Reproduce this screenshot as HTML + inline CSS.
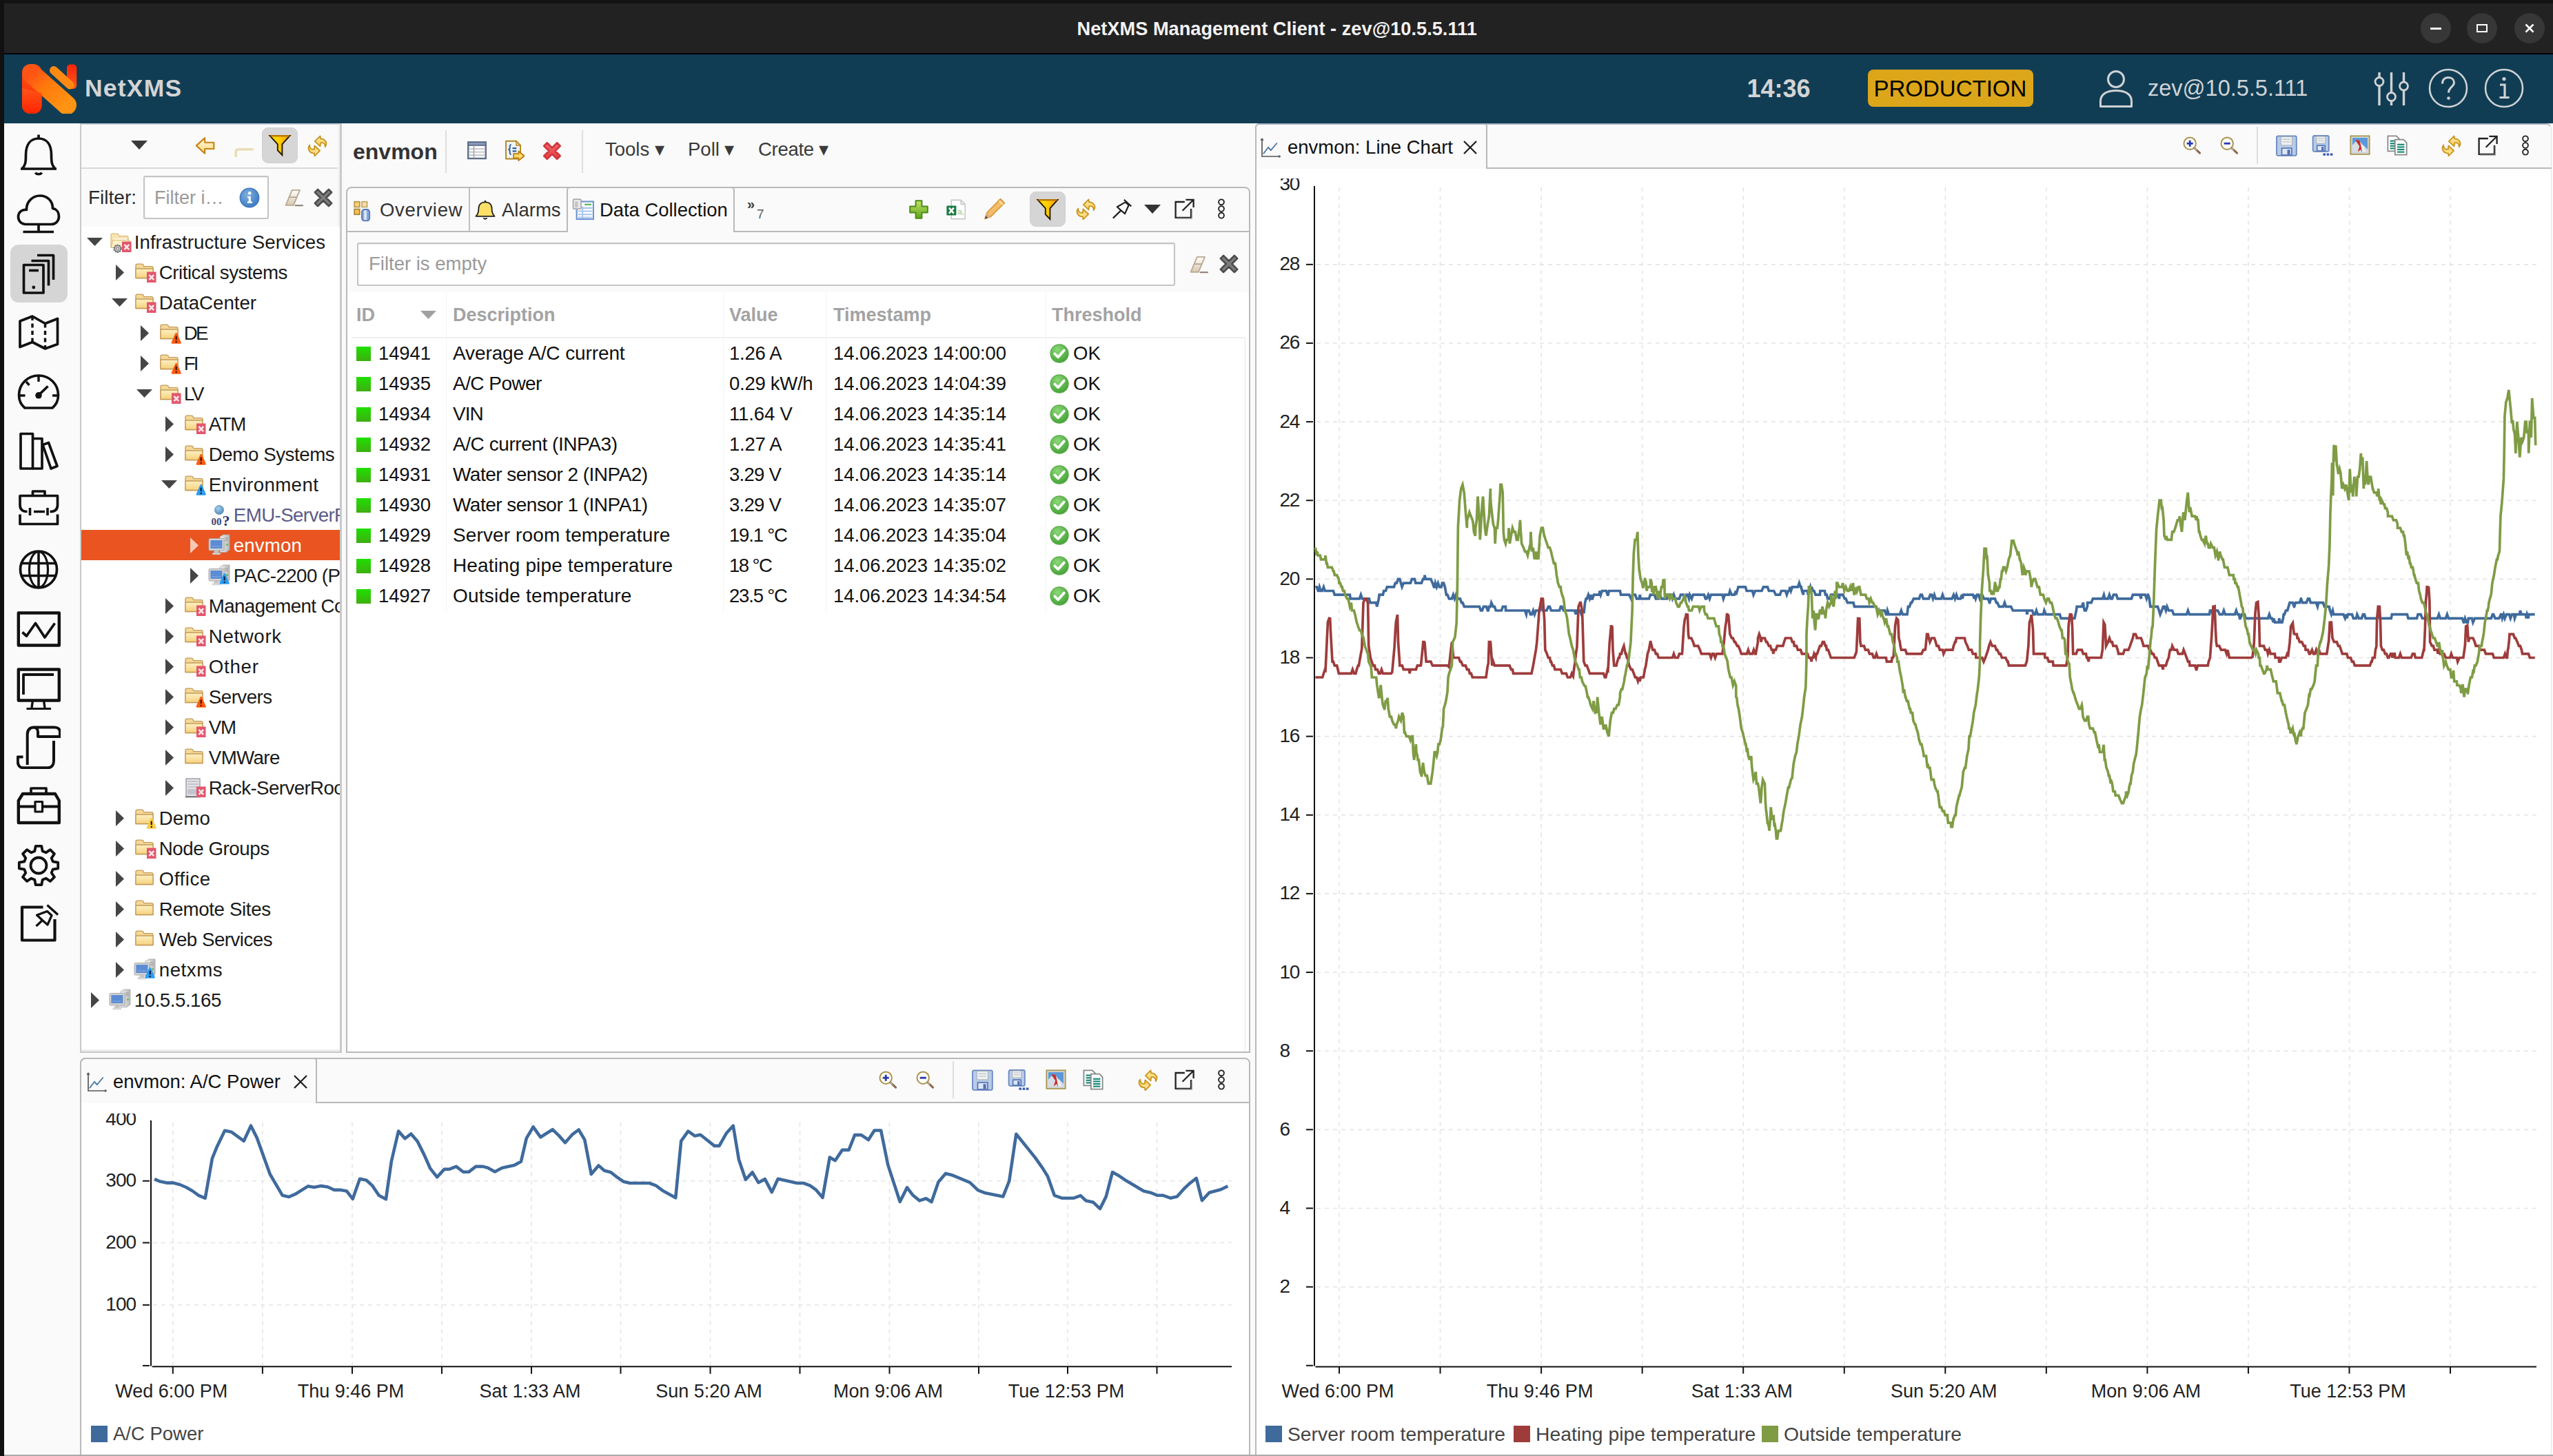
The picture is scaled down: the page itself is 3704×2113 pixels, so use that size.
<!DOCTYPE html><html><head><meta charset="utf-8"><title>NetXMS Management Client</title>
<style>
html,body{margin:0;padding:0;}
body{width:3704px;height:2113px;overflow:hidden;background:#fafafa;font-family:"Liberation Sans",sans-serif;position:relative;}
div,svg{box-sizing:border-box;}
</style></head><body>
<div style="position:absolute;left:0px;top:0px;width:3704px;height:79px;background:#131313;"></div>
<div style="position:absolute;left:6px;top:5px;width:3698px;height:72px;background:#222222;"></div>
<div style="position:absolute;left:0px;top:77px;width:3704px;height:2px;background:#02020a;"></div>
<div style="position:absolute;left:0px;top:0px;width:6px;height:2113px;background:#111111;"></div>
<div style="position:absolute;left:1562.5px;top:21.5px;height:40px;line-height:40px;font-size:27.2px;color:#f2f2f2;font-weight:700;white-space:pre;letter-spacing:0.02px;">NetXMS Management Client - zev@10.5.5.111</div>
<div style="position:absolute;left:3512px;top:19px;width:44px;height:44px;border-radius:50%;background:#373737;"></div>
<div style="position:absolute;left:3526px;top:40px;width:16px;height:2.5px;background:#fff;"></div>
<div style="position:absolute;left:3579px;top:19px;width:44px;height:44px;border-radius:50%;background:#373737;"></div>
<div style="position:absolute;left:3593px;top:35px;width:16px;height:12px;border:2.5px solid #fff;"></div>
<div style="position:absolute;left:3648px;top:19px;width:44px;height:44px;border-radius:50%;background:#373737;"></div>
<svg style="position:absolute;left:3662px;top:33px;" width="16" height="16" viewBox="0 0 16 16"><path d="M2.5 2.5 L13.5 13.5 M13.5 2.5 L2.5 13.5" stroke="#fff" stroke-width="2.6" fill="none"/></svg>
<div style="position:absolute;left:6px;top:79px;width:3698px;height:100px;background:#113d54;"></div>
<svg style="position:absolute;left:31px;top:92px;" width="82" height="73" viewBox="0 0 82 73"><defs><linearGradient id="lg1" x1="0" y1="0" x2="0" y2="1"><stop offset="0" stop-color="#ff5418"/><stop offset="1" stop-color="#ff2400"/></linearGradient><linearGradient id="lg2" x1="0" y1="0" x2="1" y2="1"><stop offset="0" stop-color="#ff5414"/><stop offset=".4" stop-color="#ff7a0c"/><stop offset="1" stop-color="#ff9414"/></linearGradient><linearGradient id="lg3" x1="0" y1="0" x2="0" y2="1"><stop offset="0" stop-color="#ff2408"/><stop offset="1" stop-color="#ff5a1a"/></linearGradient></defs><rect x="66" y="1.5" width="14.2" height="35.5" rx="5" fill="url(#lg3)"/><path d="M47 10 L70.5 31.5" stroke="#ff8a12" stroke-width="12" stroke-linecap="round" fill="none"/><rect x="1" y="1" width="28.5" height="72" rx="12" fill="url(#lg1)"/><path d="M15.5 15.5 L66 60.5" stroke="url(#lg2)" stroke-width="28" stroke-linecap="round" fill="none"/><path d="M1 36 V61 C1 68 6 73 13 73 H17.5 C24.5 73 29.5 68 29.5 61 V43 Z" fill="url(#lg1)"/></svg>
<div style="position:absolute;left:123px;top:108px;height:40px;line-height:40px;font-size:35.5px;color:#d4d4d4;font-weight:700;white-space:pre;letter-spacing:1.2px;">NetXMS</div>
<div style="position:absolute;left:2534.5px;top:109px;height:40px;line-height:40px;font-size:36px;color:#d4d4d4;font-weight:700;white-space:pre;">14:36</div>
<div style="position:absolute;left:2710px;top:101px;width:240px;height:54px;background:#dba61a;border-radius:8px;"></div>
<div style="position:absolute;left:2718.5px;top:109px;height:40px;line-height:40px;font-size:33px;color:#000;font-weight:400;white-space:pre;">PRODUCTION</div>
<svg style="position:absolute;left:3044px;top:100px;" width="52" height="58" viewBox="0 0 52 58"><circle cx="26" cy="15" r="11.5" fill="none" stroke="#cfd2d4" stroke-width="3"/><path d="M3.5 54.5 V47 C3.5 37 12 31.5 26 31.5 S48.5 37 48.5 47 V54.5 Z" fill="none" stroke="#cfd2d4" stroke-width="3" stroke-linejoin="round"/></svg>
<div style="position:absolute;left:3116px;top:108px;height:40px;line-height:40px;font-size:32.5px;color:#cfd3d6;font-weight:400;white-space:pre;">zev@10.5.5.111</div>
<svg style="position:absolute;left:3442px;top:100px;" width="56" height="56" viewBox="0 0 56 56"><path d="M10 5 V12.0 M10 25.0 V53" stroke="#cfd2d4" stroke-width="3.4" fill="none"/><circle cx="10" cy="18.5" r="6" fill="none" stroke="#cfd2d4" stroke-width="2.8"/><path d="M27.5 5 V34.0 M27.5 47.0 V53" stroke="#cfd2d4" stroke-width="3.4" fill="none"/><circle cx="27.5" cy="40.5" r="6" fill="none" stroke="#cfd2d4" stroke-width="2.8"/><path d="M45.5 5 V18.5 M45.5 31.5 V53" stroke="#cfd2d4" stroke-width="3.4" fill="none"/><circle cx="45.5" cy="25" r="6" fill="none" stroke="#cfd2d4" stroke-width="2.8"/></svg>
<svg style="position:absolute;left:3522px;top:98px;" width="60" height="60" viewBox="0 0 60 60"><circle cx="30" cy="30" r="27" fill="none" stroke="#cfd2d4" stroke-width="2.6"/><path d="M21.5 23.5 C21.5 17 25.5 14.5 30 14.5 C35 14.5 38.5 17.5 38.5 22 C38.5 28 30.5 28.5 30.5 36.5" fill="none" stroke="#cfd2d4" stroke-width="3"/><circle cx="30.5" cy="44.5" r="2.3" fill="#cfd2d4"/></svg>
<svg style="position:absolute;left:3603px;top:98px;" width="60" height="60" viewBox="0 0 60 60"><circle cx="30" cy="30" r="27" fill="none" stroke="#cfd2d4" stroke-width="2.6"/><circle cx="30" cy="16.5" r="2.6" fill="#cfd2d4"/><path d="M24 25 H31 V43 M23.5 43.5 H37.5" fill="none" stroke="#cfd2d4" stroke-width="3.2"/></svg>
<div style="position:absolute;left:6px;top:179px;width:111px;height:1934px;background:#fafafa;"></div>
<div style="position:absolute;left:14.5px;top:355px;width:83px;height:83.5px;background:#d5d5d5;border-radius:12px;"></div>
<svg style="position:absolute;left:24px;top:193px;" width="64" height="64" viewBox="0 0 64 64"><path d="M32 2.5 V8" fill="none" stroke="#111" stroke-width="3.7" stroke-linejoin="round" stroke-linecap="butt" /><path d="M6 52 H58 M8 52 C13 47 13.5 42 13.5 32 C13.5 17 20 8 32 8 C44 8 50.5 17 50.5 32 C50.5 42 51 47 56 52" fill="none" stroke="#111" stroke-width="3.7" stroke-linejoin="round" stroke-linecap="butt" /><path d="M27.5 57.5 C29 60.5 35 60.5 36.5 57.5" fill="none" stroke="#111" stroke-width="3.6" stroke-linejoin="round" stroke-linecap="butt" /></svg>
<svg style="position:absolute;left:24px;top:278px;" width="64" height="64" viewBox="0 0 64 64"><path d="M14 47.5 C6 47.5 2.5 42 2.5 36.5 C2.5 30 8 25.5 14.5 26.5 C14 14 24 6 34 6 C45 6 52.5 14 52.5 24.5 C58 25.5 61.5 30 61.5 36 C61.5 42.5 57 47.5 50 47.5 Z" fill="none" stroke="#111" stroke-width="3.7" stroke-linejoin="round" stroke-linecap="butt" /><path d="M32 47.5 V58 M9.5 58.5 H54" fill="none" stroke="#111" stroke-width="3.7" stroke-linejoin="round" stroke-linecap="butt" /></svg>
<svg style="position:absolute;left:24px;top:365px;" width="64" height="64" viewBox="0 0 64 64"><path d="M10.5 19.5 H39 V60 H10.5 Z" fill="none" stroke="#111" stroke-width="3.7" stroke-linejoin="round" stroke-linecap="butt" /><path d="M18 27.5 H32" fill="none" stroke="#111" stroke-width="3.6" stroke-linejoin="round" stroke-linecap="butt" /><circle cx="24.8" cy="52" r="2.4" fill="#111"/><path d="M21.5 13.5 H46.5 V49.5" fill="none" stroke="#111" stroke-width="3.7" stroke-linejoin="round" stroke-linecap="butt" /><path d="M30 5.5 H53.5 V41" fill="none" stroke="#111" stroke-width="3.7" stroke-linejoin="round" stroke-linecap="butt" /></svg>
<svg style="position:absolute;left:24px;top:450px;" width="64" height="64" viewBox="0 0 64 64"><path d="M5 16 L23 9 L41.5 19.5 L59.5 12.5 V49.5 L41.5 56 L23 46.5 L5 53.5 Z" fill="none" stroke="#111" stroke-width="3.7" stroke-linejoin="round" stroke-linecap="butt" /><path d="M23 9 V46.5 M41.5 19.5 V56" fill="none" stroke="#111" stroke-width="3.4" stroke-linejoin="round" stroke-linecap="butt" stroke-dasharray="6 4.5"/></svg>
<svg style="position:absolute;left:24px;top:537px;" width="64" height="64" viewBox="0 0 64 64"><path d="M12 55 C6 50 3.5 43.5 3.5 36.5 C3.5 20.5 16 8 32 8 C48 8 60.5 20.5 60.5 36.5 C60.5 43.5 58 50 52 55 Z" fill="none" stroke="#111" stroke-width="3.7" stroke-linejoin="round" stroke-linecap="butt" /><path d="M32 9 V17 M4.5 37 H12.5 M52 37 H59.5 M14 17 L18.5 22" fill="none" stroke="#111" stroke-width="3.4" stroke-linejoin="round" stroke-linecap="butt" /><path d="M32 36.5 L45.5 23.5" fill="none" stroke="#111" stroke-width="3.8" stroke-linejoin="round" stroke-linecap="butt" /><circle cx="32" cy="36.8" r="4.8" fill="#111"/></svg>
<svg style="position:absolute;left:24px;top:623px;" width="64" height="64" viewBox="0 0 64 64"><path d="M6 6.5 H23.5 V57 H6 Z" fill="none" stroke="#111" stroke-width="3.7" stroke-linejoin="round" stroke-linecap="butt" /><path d="M23.5 13.5 H37 V57 H23.5" fill="none" stroke="#111" stroke-width="3.7" stroke-linejoin="round" stroke-linecap="butt" /><path d="M38 22.5 L46.5 19.5 L59 53.5 L50 57 Z" fill="none" stroke="#111" stroke-width="3.7" stroke-linejoin="round" stroke-linecap="butt" /></svg>
<svg style="position:absolute;left:24px;top:708px;" width="64" height="64" viewBox="0 0 64 64"><path d="M23.5 11.5 V5 H41 V11.5" fill="none" stroke="#111" stroke-width="3.7" stroke-linejoin="round" stroke-linecap="butt" /><path d="M15.5 34.5 C8 34.5 5 31 5 25 V11.5 H59.5 V25 C59.5 31 56.5 34.5 48.5 34.5" fill="none" stroke="#111" stroke-width="3.7" stroke-linejoin="round" stroke-linecap="butt" /><path d="M19.5 29 V40 M45 29 V40 M25 34.5 H41" fill="none" stroke="#111" stroke-width="3.6" stroke-linejoin="round" stroke-linecap="butt" /><path d="M5 38.5 V52.5 H59.5 V38.5" fill="none" stroke="#111" stroke-width="3.7" stroke-linejoin="round" stroke-linecap="butt" /></svg>
<svg style="position:absolute;left:24px;top:795px;" width="64" height="64" viewBox="0 0 64 64"><circle cx="32" cy="31.5" r="26.5" fill="none" stroke="#111" stroke-width="3.7"/><path d="M32 5 V58 M7 22.5 H57 M7 40.5 H57" fill="none" stroke="#111" stroke-width="3.6" stroke-linejoin="round" stroke-linecap="butt" /><ellipse cx="32" cy="31.5" rx="13.5" ry="26" fill="none" stroke="#111" stroke-width="3.2"/></svg>
<svg style="position:absolute;left:24px;top:880px;" width="64" height="64" viewBox="0 0 64 64"><path d="M2.8 9.5 H61.8 V56.5 H2.8 Z" fill="none" stroke="#111" stroke-width="4.4" stroke-linejoin="round" stroke-linecap="butt" /><path d="M8.5 37.5 L14.5 43 L27.5 24.5 L41 45 L55.5 24.5" fill="none" stroke="#111" stroke-width="3.8" stroke-linejoin="round" stroke-linecap="butt" /></svg>
<svg style="position:absolute;left:24px;top:966px;" width="64" height="64" viewBox="0 0 64 64"><path d="M2.8 5.5 H61.8 V50.5 H2.8 Z" fill="none" stroke="#111" stroke-width="4.4" stroke-linejoin="round" stroke-linecap="butt" /><path d="M10 42 V13 H54" fill="none" stroke="#111" stroke-width="3.8" stroke-linejoin="round" stroke-linecap="butt" /><path d="M23.5 50.5 L22 61 M39.5 50.5 L41 61" fill="none" stroke="#111" stroke-width="3.4" stroke-linejoin="round" stroke-linecap="butt" /><path d="M14.5 63 H50" fill="none" stroke="#111" stroke-width="3.8" stroke-linejoin="round" stroke-linecap="butt" /></svg>
<svg style="position:absolute;left:24px;top:1052px;" width="64" height="64" viewBox="0 0 64 64"><path d="M15.7 58 V14 C15.7 7 19 3.5 26 3.5 H55 C60.5 3.5 63 6.5 63 10.5 V17 H31 V10 C31 6 28.5 3.5 24 3.5" fill="none" stroke="#111" stroke-width="4" stroke-linejoin="round" stroke-linecap="butt" /><path d="M54 23 V52 C54 58 51 62.3 45 62.3 H10 C4.5 62.3 1.8 58.5 1.8 53 V46.5 H9.5" fill="none" stroke="#111" stroke-width="4" stroke-linejoin="round" stroke-linecap="butt" /></svg>
<svg style="position:absolute;left:24px;top:1138px;" width="64" height="64" viewBox="0 0 64 64"><path d="M21 14 V6 H43 V14" fill="none" stroke="#111" stroke-width="3.7" stroke-linejoin="round" stroke-linecap="butt" /><path d="M2.8 24 L9 14 H56 L61.8 24 V56 H2.8 Z" fill="none" stroke="#111" stroke-width="4.4" stroke-linejoin="round" stroke-linecap="butt" /><path d="M2.8 32.5 H26.5 M38 32.5 H61.8" fill="none" stroke="#111" stroke-width="3.8" stroke-linejoin="round" stroke-linecap="butt" /><path d="M27 25.5 H37.5 V40 H27 Z" fill="none" stroke="#111" stroke-width="3.2" stroke-linejoin="round" stroke-linecap="butt" /></svg>
<svg style="position:absolute;left:24px;top:1224px;" width="64" height="64" viewBox="0 0 64 64"><path d="M26.3 11.3 L27.7 3.8 L36.3 3.8 L37.7 11.3 L42.6 13.3 L48.9 9.1 L54.9 15.1 L50.7 21.4 L52.7 26.3 L60.2 27.7 L60.2 36.3 L52.7 37.7 L50.7 42.6 L54.9 48.9 L48.9 54.9 L42.6 50.7 L37.7 52.7 L36.3 60.2 L27.7 60.2 L26.3 52.7 L21.4 50.7 L15.1 54.9 L9.1 48.9 L13.3 42.6 L11.3 37.7 L3.8 36.3 L3.8 27.7 L11.3 26.3 L13.3 21.4 L9.1 15.1 L15.1 9.1 L21.4 13.3 Z" fill="none" stroke="#111" stroke-width="3.8" stroke-linejoin="round" stroke-linecap="butt" /><circle cx="32" cy="32" r="11.5" fill="none" stroke="#111" stroke-width="3.8"/></svg>
<svg style="position:absolute;left:24px;top:1308px;" width="64" height="64" viewBox="0 0 64 64"><path d="M38.5 8.5 H8 V56.5 H55.5 V26" fill="none" stroke="#111" stroke-width="4.2" stroke-linejoin="round" stroke-linecap="butt" /><path d="M44.5 5.5 L60 19.5" fill="none" stroke="#111" stroke-width="3.4" stroke-linejoin="round" stroke-linecap="butt" /><path d="M29.5 20 L44.5 14.5 L51 20.5 L45 34 L37.5 27.5 Z" fill="none" stroke="#111" stroke-width="3.2" stroke-linejoin="round" stroke-linecap="butt" /><path d="M37.5 27.5 L28.5 36" fill="none" stroke="#111" stroke-width="3.2" stroke-linejoin="round" stroke-linecap="butt" /></svg>
<div style="position:absolute;left:116px;top:179px;width:380px;height:1349px;background:#fff;border:2px solid #c9c9c9;border-right:3px solid #c9c9c9;border-top:2px solid #c7cfd8;"></div>
<div style="position:absolute;left:118px;top:181px;width:375px;height:148px;background:#fafafa;"></div>
<div style="position:absolute;left:118px;top:243px;width:375px;height:2px;background:#d9d9d9;"></div>
<svg style="position:absolute;left:190px;top:204px;" width="24" height="14" viewBox="0 0 24 14"><path d="M0 0 H24 L12 13 Z" fill="#3a3a3a"/></svg>
<svg style="position:absolute;left:280.5px;top:194.5px;" width="34" height="34" viewBox="0 0 16 16"><defs><linearGradient id="gb" x1="0" y1="0" x2="0" y2="1"><stop offset="0" stop-color="#fff7dc"/><stop offset="1" stop-color="#ffd978"/></linearGradient></defs><path d="M1.8 7.7 L7.6 2.4 V5.5 H13.8 V9.9 H7.6 V13 Z" fill="url(#gb)" stroke="#c78418" stroke-width="1" stroke-linejoin="round"/></svg>
<svg style="position:absolute;left:335.0px;top:200.5px;" width="36" height="36" viewBox="0 0 16 16"><path d="M3.2 12 V8.6 C3.2 7.6 3.8 7 4.8 7 H14.5" fill="none" stroke="#ecdcb4" stroke-width="1.6"/></svg>
<div style="position:absolute;left:380px;top:185px;width:52px;height:52px;background:#d6d6d6;border-radius:9px;border:1px solid #d0d0d0;"></div>
<svg style="position:absolute;left:389.0px;top:194.0px;" width="34" height="34" viewBox="0 0 16 16"><defs><linearGradient id="gf" x1="0" y1="0" x2="1" y2="0"><stop offset="0" stop-color="#ffe600"/><stop offset=".45" stop-color="#ffd000"/><stop offset="1" stop-color="#ff9a1a"/></linearGradient></defs><path d="M1.2 1.4 H14.8 L9.6 7.2 V14.6 L6.5 11.4 V7.2 Z" fill="url(#gf)" stroke="#2a1a00" stroke-width="0.9" stroke-linejoin="miter"/><path d="M1.6 1.5 H14.5" stroke="#b87400" stroke-width="1.1"/></svg>
<svg style="position:absolute;left:445.0px;top:196.0px;" width="31" height="31" viewBox="0 0 16 16"><defs><linearGradient id="gs" x1="0" y1="0" x2="0" y2="1"><stop offset="0" stop-color="#fff2b4"/><stop offset="1" stop-color="#f8c448"/></linearGradient></defs><path d="M6.1 4.7 L10.1 .7 L10.3 2.8 C11.5 2.7 13.2 3 14.3 4.9 C14.9 6 14.9 7.4 13.8 8.9 C13.8 7.6 13.2 6.2 12.4 5.9 C11.8 5.7 11 5.7 10.4 5.8 L10.1 8.5 Z" fill="url(#gs)" stroke="#c8921c" stroke-width="0.9" stroke-linejoin="round"/><path d="M6.1 4.7 L10.1 .7 L10.3 2.8 C11.5 2.7 13.2 3 14.3 4.9 C14.9 6 14.9 7.4 13.8 8.9 C13.8 7.6 13.2 6.2 12.4 5.9 C11.8 5.7 11 5.7 10.4 5.8 L10.1 8.5 Z" transform="rotate(180 8 8.2)" fill="url(#gs)" stroke="#c8921c" stroke-width="0.9" stroke-linejoin="round"/></svg>
<div style="position:absolute;left:128px;top:267px;height:40px;line-height:40px;font-size:28px;color:#2a2a2a;font-weight:400;white-space:pre;">Filter:</div>
<div style="position:absolute;left:208px;top:255px;width:182px;height:63px;background:#fff;border:2px solid #c4c4c4;border-radius:3px;box-shadow:inset 0 1px 2px rgba(0,0,0,.08);"></div>
<div style="position:absolute;left:224px;top:267px;height:40px;line-height:40px;font-size:27px;color:#9a9a9a;font-weight:400;white-space:pre;">Filter i…</div>
<svg style="position:absolute;left:346.0px;top:271.0px;" width="32" height="32" viewBox="0 0 16 16"><defs><radialGradient id="gi" cx=".4" cy=".35" r=".7"><stop offset="0" stop-color="#7fb0e0"/><stop offset="1" stop-color="#3c78c0"/></radialGradient></defs><circle cx="8" cy="8" r="6.9" fill="url(#gi)" stroke="#3a72b8" stroke-width=".6"/><circle cx="8.1" cy="4.7" r="1.15" fill="#fff"/><path d="M6.6 7 H8.9 V10.8 H10 V11.9 H6.4 V10.8 H7.4 V8.1 H6.6 Z" fill="#fff"/></svg>
<svg style="position:absolute;left:411.0px;top:271.0px;" width="32" height="32" viewBox="0 0 16 16"><defs><linearGradient id="ge" x1="0" y1="0" x2="0" y2="1"><stop offset="0" stop-color="#fff"/><stop offset="1" stop-color="#d8c8b0"/></linearGradient></defs><path d="M6.4 2.4 H12 L7.4 13.4 H1.8 Z" fill="url(#ge)" stroke="#b8a890" stroke-width=".9" stroke-linejoin="round"/><path d="M4.6 7.6 H9.6" stroke="#b0a088" stroke-width=".8"/><path d="M8.4 13.6 H14.4" stroke="#8a7a70" stroke-width="1"/></svg>
<svg style="position:absolute;left:453.0px;top:271.0px;" width="32" height="32" viewBox="0 0 16 16"><path d="M11.96 1.92 L14.08 4.04 L10.12 8.00 L14.08 11.96 L11.96 14.08 L8.00 10.12 L4.04 14.08 L1.92 11.96 L5.88 8.00 L1.92 4.04 L4.04 1.92 L8.00 5.88 Z" fill="#7c7c7c" stroke="#4c4c4c" stroke-width="1.3" stroke-linejoin="round"/></svg>
<div style="position:absolute;left:118px;top:329px;width:375px;height:1197px;overflow:hidden;">
<svg style="position:absolute;left:8px;top:16px" width="24" height="13"><path d="M0 0 H23 L11.5 12 Z" fill="#454545"/></svg>
<svg style="position:absolute;left:42px;top:9.3px;overflow:visible" width="34" height="32" viewBox="0 0 34 32"><path d="M1 21.5 V3.2 C1 2 1.8 1.2 3 1.2 H10 C11 1.2 11.6 1.6 12 2.6 L12.8 4.6 H24 C25.2 4.6 26 5.4 26 6.6 V21.5 Z" fill="#fbe6b0" stroke="#d8b878" stroke-width="1.2" stroke-linejoin="round"/><path d="M4 7.4 H24.6 V11 H4 Z" fill="#fff8e4" stroke="#e8d4a0" stroke-width=".6"/><path d="M3.6 10.5 H27.6 L25.6 21.5 H1.4 Z" fill="#fdf0c8" stroke="#d8b878" stroke-width="1.1" stroke-linejoin="round"/><circle cx="10.6" cy="22.8" r="5.4" fill="#a8a8a8" stroke="#5c5c5c" stroke-width="1.4" stroke-dasharray="2.1 1.3"/><circle cx="10.6" cy="22.8" r="4.2" fill="#c8c8c8" stroke="#6c6c6c" stroke-width=".8"/><circle cx="10.6" cy="22.8" r="1.7" fill="#f0f0f0" stroke="#5c5c5c" stroke-width=".8"/><rect x="17" y="12.5" width="13.5" height="15.5" fill="#e2566c"/><path d="M20.4 17 L27.2 24.2 M27.2 17 L20.4 24.2" stroke="#fbe4e6" stroke-width="2.6" fill="none"/></svg>
<div style="position:absolute;left:76.8px;top:2.5px;height:40px;line-height:40px;font-size:27.7px;color:#1a1a1a;white-space:pre;letter-spacing:0.01px;">Infrastructure Services</div>
<svg style="position:absolute;left:50px;top:54.5px" width="13" height="24"><path d="M0 0 V23 L12 11.5 Z" fill="#454545"/></svg>
<svg style="position:absolute;left:78px;top:53.3px;overflow:visible" width="34" height="32" viewBox="0 0 34 32"><defs><linearGradient id="gfo" x1="0" y1="0" x2="0" y2="1"><stop offset="0" stop-color="#fdf0c4"/><stop offset="1" stop-color="#f6d27c"/></linearGradient></defs><path d="M1 21.5 V3.2 C1 2 1.8 1.2 3 1.2 H10 C11 1.2 11.6 1.6 12 2.6 L12.8 4.6 H24 C25.2 4.6 26 5.4 26 6.6 V21.5 Z" fill="#f4d898" stroke="#c49a58" stroke-width="1.3" stroke-linejoin="round"/><path d="M1 21.5 V8 H26 V21.5 Z" fill="url(#gfo)" stroke="#c49a58" stroke-width="1.3" stroke-linejoin="round"/><rect x="17" y="12.5" width="13.5" height="15.5" fill="#e2566c"/><path d="M20.4 17 L27.2 24.2 M27.2 17 L20.4 24.2" stroke="#fbe4e6" stroke-width="2.6" fill="none"/></svg>
<div style="position:absolute;left:112.8px;top:46.5px;height:40px;line-height:40px;font-size:27.7px;color:#1a1a1a;white-space:pre;letter-spacing:-0.48px;">Critical systems</div>
<svg style="position:absolute;left:44px;top:104px" width="24" height="13"><path d="M0 0 H23 L11.5 12 Z" fill="#454545"/></svg>
<svg style="position:absolute;left:78px;top:97.3px;overflow:visible" width="34" height="32" viewBox="0 0 34 32"><defs><linearGradient id="gfo" x1="0" y1="0" x2="0" y2="1"><stop offset="0" stop-color="#fdf0c4"/><stop offset="1" stop-color="#f6d27c"/></linearGradient></defs><path d="M1 21.5 V3.2 C1 2 1.8 1.2 3 1.2 H10 C11 1.2 11.6 1.6 12 2.6 L12.8 4.6 H24 C25.2 4.6 26 5.4 26 6.6 V21.5 Z" fill="#f4d898" stroke="#c49a58" stroke-width="1.3" stroke-linejoin="round"/><path d="M1 21.5 V8 H26 V21.5 Z" fill="url(#gfo)" stroke="#c49a58" stroke-width="1.3" stroke-linejoin="round"/><rect x="17" y="12.5" width="13.5" height="15.5" fill="#e2566c"/><path d="M20.4 17 L27.2 24.2 M27.2 17 L20.4 24.2" stroke="#fbe4e6" stroke-width="2.6" fill="none"/></svg>
<div style="position:absolute;left:112.8px;top:90.5px;height:40px;line-height:40px;font-size:27.7px;color:#1a1a1a;white-space:pre;letter-spacing:-0.04px;">DataCenter</div>
<svg style="position:absolute;left:86px;top:142.5px" width="13" height="24"><path d="M0 0 V23 L12 11.5 Z" fill="#454545"/></svg>
<svg style="position:absolute;left:114px;top:141.3px;overflow:visible" width="34" height="32" viewBox="0 0 34 32"><defs><linearGradient id="gfo" x1="0" y1="0" x2="0" y2="1"><stop offset="0" stop-color="#fdf0c4"/><stop offset="1" stop-color="#f6d27c"/></linearGradient></defs><path d="M1 21.5 V3.2 C1 2 1.8 1.2 3 1.2 H10 C11 1.2 11.6 1.6 12 2.6 L12.8 4.6 H24 C25.2 4.6 26 5.4 26 6.6 V21.5 Z" fill="#f4d898" stroke="#c49a58" stroke-width="1.3" stroke-linejoin="round"/><path d="M1 21.5 V8 H26 V21.5 Z" fill="url(#gfo)" stroke="#c49a58" stroke-width="1.3" stroke-linejoin="round"/><path d="M23.7 14.4 L29.4 27.4 H18 Z" fill="#ff5a10" stroke="#ff5a10" stroke-width="2.8" stroke-linejoin="round"/><path d="M23.7 17.6 V23.2" stroke="#401800" stroke-width="2.3"/><circle cx="23.7" cy="26" r="1.3" fill="#401800"/></svg>
<div style="position:absolute;left:148.8px;top:134.5px;height:40px;line-height:40px;font-size:27.7px;color:#1a1a1a;white-space:pre;letter-spacing:-2.74px;">DE</div>
<svg style="position:absolute;left:86px;top:186.5px" width="13" height="24"><path d="M0 0 V23 L12 11.5 Z" fill="#454545"/></svg>
<svg style="position:absolute;left:114px;top:185.3px;overflow:visible" width="34" height="32" viewBox="0 0 34 32"><defs><linearGradient id="gfo" x1="0" y1="0" x2="0" y2="1"><stop offset="0" stop-color="#fdf0c4"/><stop offset="1" stop-color="#f6d27c"/></linearGradient></defs><path d="M1 21.5 V3.2 C1 2 1.8 1.2 3 1.2 H10 C11 1.2 11.6 1.6 12 2.6 L12.8 4.6 H24 C25.2 4.6 26 5.4 26 6.6 V21.5 Z" fill="#f4d898" stroke="#c49a58" stroke-width="1.3" stroke-linejoin="round"/><path d="M1 21.5 V8 H26 V21.5 Z" fill="url(#gfo)" stroke="#c49a58" stroke-width="1.3" stroke-linejoin="round"/><path d="M23.7 14.4 L29.4 27.4 H18 Z" fill="#ff5a10" stroke="#ff5a10" stroke-width="2.8" stroke-linejoin="round"/><path d="M23.7 17.6 V23.2" stroke="#401800" stroke-width="2.3"/><circle cx="23.7" cy="26" r="1.3" fill="#401800"/></svg>
<div style="position:absolute;left:148.8px;top:178.5px;height:40px;line-height:40px;font-size:27.7px;color:#1a1a1a;white-space:pre;letter-spacing:-3.06px;">FI</div>
<svg style="position:absolute;left:80px;top:236px" width="24" height="13"><path d="M0 0 H23 L11.5 12 Z" fill="#454545"/></svg>
<svg style="position:absolute;left:114px;top:229.3px;overflow:visible" width="34" height="32" viewBox="0 0 34 32"><defs><linearGradient id="gfo" x1="0" y1="0" x2="0" y2="1"><stop offset="0" stop-color="#fdf0c4"/><stop offset="1" stop-color="#f6d27c"/></linearGradient></defs><path d="M1 21.5 V3.2 C1 2 1.8 1.2 3 1.2 H10 C11 1.2 11.6 1.6 12 2.6 L12.8 4.6 H24 C25.2 4.6 26 5.4 26 6.6 V21.5 Z" fill="#f4d898" stroke="#c49a58" stroke-width="1.3" stroke-linejoin="round"/><path d="M1 21.5 V8 H26 V21.5 Z" fill="url(#gfo)" stroke="#c49a58" stroke-width="1.3" stroke-linejoin="round"/><rect x="17" y="12.5" width="13.5" height="15.5" fill="#e2566c"/><path d="M20.4 17 L27.2 24.2 M27.2 17 L20.4 24.2" stroke="#fbe4e6" stroke-width="2.6" fill="none"/></svg>
<div style="position:absolute;left:148.8px;top:222.5px;height:40px;line-height:40px;font-size:27.7px;color:#1a1a1a;white-space:pre;letter-spacing:-2.11px;">LV</div>
<svg style="position:absolute;left:122px;top:274.5px" width="13" height="24"><path d="M0 0 V23 L12 11.5 Z" fill="#454545"/></svg>
<svg style="position:absolute;left:150px;top:273.3px;overflow:visible" width="34" height="32" viewBox="0 0 34 32"><defs><linearGradient id="gfo" x1="0" y1="0" x2="0" y2="1"><stop offset="0" stop-color="#fdf0c4"/><stop offset="1" stop-color="#f6d27c"/></linearGradient></defs><path d="M1 21.5 V3.2 C1 2 1.8 1.2 3 1.2 H10 C11 1.2 11.6 1.6 12 2.6 L12.8 4.6 H24 C25.2 4.6 26 5.4 26 6.6 V21.5 Z" fill="#f4d898" stroke="#c49a58" stroke-width="1.3" stroke-linejoin="round"/><path d="M1 21.5 V8 H26 V21.5 Z" fill="url(#gfo)" stroke="#c49a58" stroke-width="1.3" stroke-linejoin="round"/><rect x="17" y="12.5" width="13.5" height="15.5" fill="#e2566c"/><path d="M20.4 17 L27.2 24.2 M27.2 17 L20.4 24.2" stroke="#fbe4e6" stroke-width="2.6" fill="none"/></svg>
<div style="position:absolute;left:184.8px;top:266.5px;height:40px;line-height:40px;font-size:27.7px;color:#1a1a1a;white-space:pre;letter-spacing:-0.94px;">ATM</div>
<svg style="position:absolute;left:122px;top:318.5px" width="13" height="24"><path d="M0 0 V23 L12 11.5 Z" fill="#454545"/></svg>
<svg style="position:absolute;left:150px;top:317.3px;overflow:visible" width="34" height="32" viewBox="0 0 34 32"><defs><linearGradient id="gfo" x1="0" y1="0" x2="0" y2="1"><stop offset="0" stop-color="#fdf0c4"/><stop offset="1" stop-color="#f6d27c"/></linearGradient></defs><path d="M1 21.5 V3.2 C1 2 1.8 1.2 3 1.2 H10 C11 1.2 11.6 1.6 12 2.6 L12.8 4.6 H24 C25.2 4.6 26 5.4 26 6.6 V21.5 Z" fill="#f4d898" stroke="#c49a58" stroke-width="1.3" stroke-linejoin="round"/><path d="M1 21.5 V8 H26 V21.5 Z" fill="url(#gfo)" stroke="#c49a58" stroke-width="1.3" stroke-linejoin="round"/><path d="M23.7 14.4 L29.4 27.4 H18 Z" fill="#ff5a10" stroke="#ff5a10" stroke-width="2.8" stroke-linejoin="round"/><path d="M23.7 17.6 V23.2" stroke="#401800" stroke-width="2.3"/><circle cx="23.7" cy="26" r="1.3" fill="#401800"/></svg>
<div style="position:absolute;left:184.8px;top:310.5px;height:40px;line-height:40px;font-size:27.7px;color:#1a1a1a;white-space:pre;letter-spacing:-0.44px;">Demo Systems</div>
<svg style="position:absolute;left:116px;top:368px" width="24" height="13"><path d="M0 0 H23 L11.5 12 Z" fill="#454545"/></svg>
<svg style="position:absolute;left:150px;top:361.3px;overflow:visible" width="34" height="32" viewBox="0 0 34 32"><defs><linearGradient id="gfo" x1="0" y1="0" x2="0" y2="1"><stop offset="0" stop-color="#fdf0c4"/><stop offset="1" stop-color="#f6d27c"/></linearGradient></defs><path d="M1 21.5 V3.2 C1 2 1.8 1.2 3 1.2 H10 C11 1.2 11.6 1.6 12 2.6 L12.8 4.6 H24 C25.2 4.6 26 5.4 26 6.6 V21.5 Z" fill="#f4d898" stroke="#c49a58" stroke-width="1.3" stroke-linejoin="round"/><path d="M1 21.5 V8 H26 V21.5 Z" fill="url(#gfo)" stroke="#c49a58" stroke-width="1.3" stroke-linejoin="round"/><path d="M23.7 14.4 L29.4 27.4 H18 Z" fill="#2c9cf4" stroke="#2c9cf4" stroke-width="2.8" stroke-linejoin="round"/><path d="M23.7 17.6 V23.2" stroke="#0c2438" stroke-width="2.3"/><circle cx="23.7" cy="26" r="1.3" fill="#0c2438"/></svg>
<div style="position:absolute;left:184.8px;top:354.5px;height:40px;line-height:40px;font-size:27.7px;color:#1a1a1a;white-space:pre;letter-spacing:0.36px;">Environment</div>
<svg style="position:absolute;left:186px;top:403.5px;overflow:visible" width="34" height="32" viewBox="0 0 34 32"><defs><radialGradient id="gse" cx=".4" cy=".35" r=".7"><stop offset="0" stop-color="#a8d0ec"/><stop offset="1" stop-color="#4c88b8"/></radialGradient></defs><circle cx="14" cy="7" r="6.6" fill="url(#gse)" stroke="#6c9cc0" stroke-width=".8"/><text x="2.5" y="28.5" font-family="Liberation Serif" font-weight="700" font-size="15" fill="#384878">00</text><text x="18.5" y="30" font-family="Liberation Serif" font-weight="700" font-size="22" fill="#283468">?</text></svg>
<div style="position:absolute;left:220.8px;top:398.5px;height:40px;line-height:40px;font-size:27.7px;color:#5b5b8a;white-space:pre;letter-spacing:-0.6px;">EMU-ServerRoom</div>
<div style="position:absolute;left:0;top:440px;width:375px;height:44px;background:#e95420;"></div>
<svg style="position:absolute;left:158px;top:450.5px" width="13" height="24"><path d="M0 0 V23 L12 11.5 Z" fill="#f8c6b4"/></svg>
<svg style="position:absolute;left:184px;top:446px;overflow:visible" width="34" height="32" viewBox="0 0 34 32"><defs><linearGradient id="gtw" x1="0" y1="0" x2="1" y2="0"><stop offset="0" stop-color="#f0f0f0"/><stop offset="1" stop-color="#b8b8b8"/></linearGradient></defs><path d="M17 4 L22 1 H31 V23 L26 26.5 H17 Z" fill="url(#gtw)" stroke="#a4a4a4" stroke-width=".8"/><path d="M24 6 H29 M24 9 H29" stroke="#909090" stroke-width="1"/><circle cx="27.5" cy="15.5" r="1.3" fill="#40b840"/><rect x="1" y="6.5" width="22" height="17.5" rx="1.5" fill="#d4d4d4" stroke="#a0a0a0" stroke-width=".9"/><rect x="3.4" y="9" width="17" height="12" fill="#5c8cd4"/><path d="M5 18 H18" stroke="#86aae0" stroke-width="1"/><path d="M9 24 H15 L16 27.6 H8 Z" fill="#c4c4c4"/><rect x="6" y="27.6" width="12" height="2.2" rx="1" fill="#e0e0e0" stroke="#b0b0b0" stroke-width=".5"/></svg>
<div style="position:absolute;left:220.8px;top:442.5px;height:40px;line-height:40px;font-size:27.7px;color:#fff;white-space:pre;letter-spacing:0.13px;">envmon</div>
<svg style="position:absolute;left:158px;top:494.5px" width="13" height="24"><path d="M0 0 V23 L12 11.5 Z" fill="#454545"/></svg>
<svg style="position:absolute;left:184px;top:490px;overflow:visible" width="34" height="32" viewBox="0 0 34 32"><defs><linearGradient id="gtw" x1="0" y1="0" x2="1" y2="0"><stop offset="0" stop-color="#f0f0f0"/><stop offset="1" stop-color="#b8b8b8"/></linearGradient></defs><path d="M17 4 L22 1 H31 V23 L26 26.5 H17 Z" fill="url(#gtw)" stroke="#a4a4a4" stroke-width=".8"/><path d="M24 6 H29 M24 9 H29" stroke="#909090" stroke-width="1"/><circle cx="27.5" cy="15.5" r="1.3" fill="#40b840"/><rect x="1" y="6.5" width="22" height="17.5" rx="1.5" fill="#d4d4d4" stroke="#a0a0a0" stroke-width=".9"/><rect x="3.4" y="9" width="17" height="12" fill="#5c8cd4"/><path d="M5 18 H18" stroke="#86aae0" stroke-width="1"/><path d="M9 24 H15 L16 27.6 H8 Z" fill="#c4c4c4"/><rect x="6" y="27.6" width="12" height="2.2" rx="1" fill="#e0e0e0" stroke="#b0b0b0" stroke-width=".5"/><path d="M23.7 14.4 L29.4 27.4 H18 Z" fill="#2c9cf4" stroke="#2c9cf4" stroke-width="2.8" stroke-linejoin="round"/><path d="M23.7 17.6 V23.2" stroke="#0c2438" stroke-width="2.3"/><circle cx="23.7" cy="26" r="1.3" fill="#0c2438"/></svg>
<div style="position:absolute;left:220.8px;top:486.5px;height:40px;line-height:40px;font-size:27.7px;color:#1a1a1a;white-space:pre;letter-spacing:-0.6px;">PAC-2200 (Power)</div>
<svg style="position:absolute;left:122px;top:538.5px" width="13" height="24"><path d="M0 0 V23 L12 11.5 Z" fill="#454545"/></svg>
<svg style="position:absolute;left:150px;top:537.3px;overflow:visible" width="34" height="32" viewBox="0 0 34 32"><defs><linearGradient id="gfo" x1="0" y1="0" x2="0" y2="1"><stop offset="0" stop-color="#fdf0c4"/><stop offset="1" stop-color="#f6d27c"/></linearGradient></defs><path d="M1 21.5 V3.2 C1 2 1.8 1.2 3 1.2 H10 C11 1.2 11.6 1.6 12 2.6 L12.8 4.6 H24 C25.2 4.6 26 5.4 26 6.6 V21.5 Z" fill="#f4d898" stroke="#c49a58" stroke-width="1.3" stroke-linejoin="round"/><path d="M1 21.5 V8 H26 V21.5 Z" fill="url(#gfo)" stroke="#c49a58" stroke-width="1.3" stroke-linejoin="round"/><rect x="17" y="12.5" width="13.5" height="15.5" fill="#e2566c"/><path d="M20.4 17 L27.2 24.2 M27.2 17 L20.4 24.2" stroke="#fbe4e6" stroke-width="2.6" fill="none"/></svg>
<div style="position:absolute;left:184.8px;top:530.5px;height:40px;line-height:40px;font-size:27.7px;color:#1a1a1a;white-space:pre;letter-spacing:-0.6px;">Management Console</div>
<svg style="position:absolute;left:122px;top:582.5px" width="13" height="24"><path d="M0 0 V23 L12 11.5 Z" fill="#454545"/></svg>
<svg style="position:absolute;left:150px;top:581.3px;overflow:visible" width="34" height="32" viewBox="0 0 34 32"><defs><linearGradient id="gfo" x1="0" y1="0" x2="0" y2="1"><stop offset="0" stop-color="#fdf0c4"/><stop offset="1" stop-color="#f6d27c"/></linearGradient></defs><path d="M1 21.5 V3.2 C1 2 1.8 1.2 3 1.2 H10 C11 1.2 11.6 1.6 12 2.6 L12.8 4.6 H24 C25.2 4.6 26 5.4 26 6.6 V21.5 Z" fill="#f4d898" stroke="#c49a58" stroke-width="1.3" stroke-linejoin="round"/><path d="M1 21.5 V8 H26 V21.5 Z" fill="url(#gfo)" stroke="#c49a58" stroke-width="1.3" stroke-linejoin="round"/><rect x="17" y="12.5" width="13.5" height="15.5" fill="#e2566c"/><path d="M20.4 17 L27.2 24.2 M27.2 17 L20.4 24.2" stroke="#fbe4e6" stroke-width="2.6" fill="none"/></svg>
<div style="position:absolute;left:184.8px;top:574.5px;height:40px;line-height:40px;font-size:27.7px;color:#1a1a1a;white-space:pre;letter-spacing:0.62px;">Network</div>
<svg style="position:absolute;left:122px;top:626.5px" width="13" height="24"><path d="M0 0 V23 L12 11.5 Z" fill="#454545"/></svg>
<svg style="position:absolute;left:150px;top:625.3px;overflow:visible" width="34" height="32" viewBox="0 0 34 32"><defs><linearGradient id="gfo" x1="0" y1="0" x2="0" y2="1"><stop offset="0" stop-color="#fdf0c4"/><stop offset="1" stop-color="#f6d27c"/></linearGradient></defs><path d="M1 21.5 V3.2 C1 2 1.8 1.2 3 1.2 H10 C11 1.2 11.6 1.6 12 2.6 L12.8 4.6 H24 C25.2 4.6 26 5.4 26 6.6 V21.5 Z" fill="#f4d898" stroke="#c49a58" stroke-width="1.3" stroke-linejoin="round"/><path d="M1 21.5 V8 H26 V21.5 Z" fill="url(#gfo)" stroke="#c49a58" stroke-width="1.3" stroke-linejoin="round"/><rect x="17" y="12.5" width="13.5" height="15.5" fill="#e2566c"/><path d="M20.4 17 L27.2 24.2 M27.2 17 L20.4 24.2" stroke="#fbe4e6" stroke-width="2.6" fill="none"/></svg>
<div style="position:absolute;left:184.8px;top:618.5px;height:40px;line-height:40px;font-size:27.7px;color:#1a1a1a;white-space:pre;letter-spacing:0.72px;">Other</div>
<svg style="position:absolute;left:122px;top:670.5px" width="13" height="24"><path d="M0 0 V23 L12 11.5 Z" fill="#454545"/></svg>
<svg style="position:absolute;left:150px;top:669.3px;overflow:visible" width="34" height="32" viewBox="0 0 34 32"><defs><linearGradient id="gfo" x1="0" y1="0" x2="0" y2="1"><stop offset="0" stop-color="#fdf0c4"/><stop offset="1" stop-color="#f6d27c"/></linearGradient></defs><path d="M1 21.5 V3.2 C1 2 1.8 1.2 3 1.2 H10 C11 1.2 11.6 1.6 12 2.6 L12.8 4.6 H24 C25.2 4.6 26 5.4 26 6.6 V21.5 Z" fill="#f4d898" stroke="#c49a58" stroke-width="1.3" stroke-linejoin="round"/><path d="M1 21.5 V8 H26 V21.5 Z" fill="url(#gfo)" stroke="#c49a58" stroke-width="1.3" stroke-linejoin="round"/><path d="M23.7 14.4 L29.4 27.4 H18 Z" fill="#ff5a10" stroke="#ff5a10" stroke-width="2.8" stroke-linejoin="round"/><path d="M23.7 17.6 V23.2" stroke="#401800" stroke-width="2.3"/><circle cx="23.7" cy="26" r="1.3" fill="#401800"/></svg>
<div style="position:absolute;left:184.8px;top:662.5px;height:40px;line-height:40px;font-size:27.7px;color:#1a1a1a;white-space:pre;letter-spacing:-0.51px;">Servers</div>
<svg style="position:absolute;left:122px;top:714.5px" width="13" height="24"><path d="M0 0 V23 L12 11.5 Z" fill="#454545"/></svg>
<svg style="position:absolute;left:150px;top:713.3px;overflow:visible" width="34" height="32" viewBox="0 0 34 32"><defs><linearGradient id="gfo" x1="0" y1="0" x2="0" y2="1"><stop offset="0" stop-color="#fdf0c4"/><stop offset="1" stop-color="#f6d27c"/></linearGradient></defs><path d="M1 21.5 V3.2 C1 2 1.8 1.2 3 1.2 H10 C11 1.2 11.6 1.6 12 2.6 L12.8 4.6 H24 C25.2 4.6 26 5.4 26 6.6 V21.5 Z" fill="#f4d898" stroke="#c49a58" stroke-width="1.3" stroke-linejoin="round"/><path d="M1 21.5 V8 H26 V21.5 Z" fill="url(#gfo)" stroke="#c49a58" stroke-width="1.3" stroke-linejoin="round"/><rect x="17" y="12.5" width="13.5" height="15.5" fill="#e2566c"/><path d="M20.4 17 L27.2 24.2 M27.2 17 L20.4 24.2" stroke="#fbe4e6" stroke-width="2.6" fill="none"/></svg>
<div style="position:absolute;left:184.8px;top:706.5px;height:40px;line-height:40px;font-size:27.7px;color:#1a1a1a;white-space:pre;letter-spacing:-1.23px;">VM</div>
<svg style="position:absolute;left:122px;top:758.5px" width="13" height="24"><path d="M0 0 V23 L12 11.5 Z" fill="#454545"/></svg>
<svg style="position:absolute;left:150px;top:757.3px;overflow:visible" width="34" height="32" viewBox="0 0 34 32"><defs><linearGradient id="gfo" x1="0" y1="0" x2="0" y2="1"><stop offset="0" stop-color="#fdf0c4"/><stop offset="1" stop-color="#f6d27c"/></linearGradient></defs><path d="M1 21.5 V3.2 C1 2 1.8 1.2 3 1.2 H10 C11 1.2 11.6 1.6 12 2.6 L12.8 4.6 H24 C25.2 4.6 26 5.4 26 6.6 V21.5 Z" fill="#f4d898" stroke="#c49a58" stroke-width="1.3" stroke-linejoin="round"/><path d="M1 21.5 V8 H26 V21.5 Z" fill="url(#gfo)" stroke="#c49a58" stroke-width="1.3" stroke-linejoin="round"/></svg>
<div style="position:absolute;left:184.8px;top:750.5px;height:40px;line-height:40px;font-size:27.7px;color:#1a1a1a;white-space:pre;letter-spacing:-0.62px;">VMWare</div>
<svg style="position:absolute;left:122px;top:802.5px" width="13" height="24"><path d="M0 0 V23 L12 11.5 Z" fill="#454545"/></svg>
<svg style="position:absolute;left:150px;top:799.5px;overflow:visible" width="34" height="32" viewBox="0 0 34 32"><rect x="2" y="1" width="20" height="26" fill="#e4e4e8" stroke="#8c8c98" stroke-width="1.2"/><path d="M4 5 H20 M4 9 H20 M4 13 H20" stroke="#a4a4b0" stroke-width="1.2"/><rect x="4" y="16" width="16" height="8" fill="#c4c4cc"/><path d="M1 27.5 H23" stroke="#606068" stroke-width="1.6"/><rect x="17" y="12.5" width="13.5" height="15.5" fill="#e2566c"/><path d="M20.4 17 L27.2 24.2 M27.2 17 L20.4 24.2" stroke="#fbe4e6" stroke-width="2.6" fill="none"/></svg>
<div style="position:absolute;left:184.8px;top:794.5px;height:40px;line-height:40px;font-size:27.7px;color:#1a1a1a;white-space:pre;letter-spacing:-0.6px;">Rack-ServerRoom</div>
<svg style="position:absolute;left:50px;top:846.5px" width="13" height="24"><path d="M0 0 V23 L12 11.5 Z" fill="#454545"/></svg>
<svg style="position:absolute;left:78px;top:845.3px;overflow:visible" width="34" height="32" viewBox="0 0 34 32"><defs><linearGradient id="gfo" x1="0" y1="0" x2="0" y2="1"><stop offset="0" stop-color="#fdf0c4"/><stop offset="1" stop-color="#f6d27c"/></linearGradient></defs><path d="M1 21.5 V3.2 C1 2 1.8 1.2 3 1.2 H10 C11 1.2 11.6 1.6 12 2.6 L12.8 4.6 H24 C25.2 4.6 26 5.4 26 6.6 V21.5 Z" fill="#f4d898" stroke="#c49a58" stroke-width="1.3" stroke-linejoin="round"/><path d="M1 21.5 V8 H26 V21.5 Z" fill="url(#gfo)" stroke="#c49a58" stroke-width="1.3" stroke-linejoin="round"/><path d="M23.7 14.4 L29.4 27.4 H18 Z" fill="#f8d048" stroke="#f8d048" stroke-width="2.8" stroke-linejoin="round"/><path d="M23.7 17.6 V23.2" stroke="#401800" stroke-width="2.3"/><circle cx="23.7" cy="26" r="1.3" fill="#401800"/></svg>
<div style="position:absolute;left:112.8px;top:838.5px;height:40px;line-height:40px;font-size:27.7px;color:#1a1a1a;white-space:pre;letter-spacing:0.08px;">Demo</div>
<svg style="position:absolute;left:50px;top:890.5px" width="13" height="24"><path d="M0 0 V23 L12 11.5 Z" fill="#454545"/></svg>
<svg style="position:absolute;left:78px;top:889.3px;overflow:visible" width="34" height="32" viewBox="0 0 34 32"><defs><linearGradient id="gfo" x1="0" y1="0" x2="0" y2="1"><stop offset="0" stop-color="#fdf0c4"/><stop offset="1" stop-color="#f6d27c"/></linearGradient></defs><path d="M1 21.5 V3.2 C1 2 1.8 1.2 3 1.2 H10 C11 1.2 11.6 1.6 12 2.6 L12.8 4.6 H24 C25.2 4.6 26 5.4 26 6.6 V21.5 Z" fill="#f4d898" stroke="#c49a58" stroke-width="1.3" stroke-linejoin="round"/><path d="M1 21.5 V8 H26 V21.5 Z" fill="url(#gfo)" stroke="#c49a58" stroke-width="1.3" stroke-linejoin="round"/><rect x="17" y="12.5" width="13.5" height="15.5" fill="#e2566c"/><path d="M20.4 17 L27.2 24.2 M27.2 17 L20.4 24.2" stroke="#fbe4e6" stroke-width="2.6" fill="none"/></svg>
<div style="position:absolute;left:112.8px;top:882.5px;height:40px;line-height:40px;font-size:27.7px;color:#1a1a1a;white-space:pre;letter-spacing:-0.44px;">Node Groups</div>
<svg style="position:absolute;left:50px;top:934.5px" width="13" height="24"><path d="M0 0 V23 L12 11.5 Z" fill="#454545"/></svg>
<svg style="position:absolute;left:78px;top:933.3px;overflow:visible" width="34" height="32" viewBox="0 0 34 32"><defs><linearGradient id="gfo" x1="0" y1="0" x2="0" y2="1"><stop offset="0" stop-color="#fdf0c4"/><stop offset="1" stop-color="#f6d27c"/></linearGradient></defs><path d="M1 21.5 V3.2 C1 2 1.8 1.2 3 1.2 H10 C11 1.2 11.6 1.6 12 2.6 L12.8 4.6 H24 C25.2 4.6 26 5.4 26 6.6 V21.5 Z" fill="#f4d898" stroke="#c49a58" stroke-width="1.3" stroke-linejoin="round"/><path d="M1 21.5 V8 H26 V21.5 Z" fill="url(#gfo)" stroke="#c49a58" stroke-width="1.3" stroke-linejoin="round"/></svg>
<div style="position:absolute;left:112.8px;top:926.5px;height:40px;line-height:40px;font-size:27.7px;color:#1a1a1a;white-space:pre;letter-spacing:0.53px;">Office</div>
<svg style="position:absolute;left:50px;top:978.5px" width="13" height="24"><path d="M0 0 V23 L12 11.5 Z" fill="#454545"/></svg>
<svg style="position:absolute;left:78px;top:977.3px;overflow:visible" width="34" height="32" viewBox="0 0 34 32"><defs><linearGradient id="gfo" x1="0" y1="0" x2="0" y2="1"><stop offset="0" stop-color="#fdf0c4"/><stop offset="1" stop-color="#f6d27c"/></linearGradient></defs><path d="M1 21.5 V3.2 C1 2 1.8 1.2 3 1.2 H10 C11 1.2 11.6 1.6 12 2.6 L12.8 4.6 H24 C25.2 4.6 26 5.4 26 6.6 V21.5 Z" fill="#f4d898" stroke="#c49a58" stroke-width="1.3" stroke-linejoin="round"/><path d="M1 21.5 V8 H26 V21.5 Z" fill="url(#gfo)" stroke="#c49a58" stroke-width="1.3" stroke-linejoin="round"/></svg>
<div style="position:absolute;left:112.8px;top:970.5px;height:40px;line-height:40px;font-size:27.7px;color:#1a1a1a;white-space:pre;letter-spacing:-0.36px;">Remote Sites</div>
<svg style="position:absolute;left:50px;top:1022.5px" width="13" height="24"><path d="M0 0 V23 L12 11.5 Z" fill="#454545"/></svg>
<svg style="position:absolute;left:78px;top:1021.3px;overflow:visible" width="34" height="32" viewBox="0 0 34 32"><defs><linearGradient id="gfo" x1="0" y1="0" x2="0" y2="1"><stop offset="0" stop-color="#fdf0c4"/><stop offset="1" stop-color="#f6d27c"/></linearGradient></defs><path d="M1 21.5 V3.2 C1 2 1.8 1.2 3 1.2 H10 C11 1.2 11.6 1.6 12 2.6 L12.8 4.6 H24 C25.2 4.6 26 5.4 26 6.6 V21.5 Z" fill="#f4d898" stroke="#c49a58" stroke-width="1.3" stroke-linejoin="round"/><path d="M1 21.5 V8 H26 V21.5 Z" fill="url(#gfo)" stroke="#c49a58" stroke-width="1.3" stroke-linejoin="round"/></svg>
<div style="position:absolute;left:112.8px;top:1014.5px;height:40px;line-height:40px;font-size:27.7px;color:#1a1a1a;white-space:pre;letter-spacing:-0.5px;">Web Services</div>
<svg style="position:absolute;left:50px;top:1066.5px" width="13" height="24"><path d="M0 0 V23 L12 11.5 Z" fill="#454545"/></svg>
<svg style="position:absolute;left:76px;top:1062px;overflow:visible" width="34" height="32" viewBox="0 0 34 32"><defs><linearGradient id="gtw" x1="0" y1="0" x2="1" y2="0"><stop offset="0" stop-color="#f0f0f0"/><stop offset="1" stop-color="#b8b8b8"/></linearGradient></defs><path d="M17 4 L22 1 H31 V23 L26 26.5 H17 Z" fill="url(#gtw)" stroke="#a4a4a4" stroke-width=".8"/><path d="M24 6 H29 M24 9 H29" stroke="#909090" stroke-width="1"/><circle cx="27.5" cy="15.5" r="1.3" fill="#40b840"/><rect x="1" y="6.5" width="22" height="17.5" rx="1.5" fill="#d4d4d4" stroke="#a0a0a0" stroke-width=".9"/><rect x="3.4" y="9" width="17" height="12" fill="#5c8cd4"/><path d="M5 18 H18" stroke="#86aae0" stroke-width="1"/><path d="M9 24 H15 L16 27.6 H8 Z" fill="#c4c4c4"/><rect x="6" y="27.6" width="12" height="2.2" rx="1" fill="#e0e0e0" stroke="#b0b0b0" stroke-width=".5"/><path d="M23.7 14.4 L29.4 27.4 H18 Z" fill="#2c9cf4" stroke="#2c9cf4" stroke-width="2.8" stroke-linejoin="round"/><path d="M23.7 17.6 V23.2" stroke="#0c2438" stroke-width="2.3"/><circle cx="23.7" cy="26" r="1.3" fill="#0c2438"/></svg>
<div style="position:absolute;left:112.8px;top:1058.5px;height:40px;line-height:40px;font-size:27.7px;color:#1a1a1a;white-space:pre;letter-spacing:0.5px;">netxms</div>
<svg style="position:absolute;left:14px;top:1110.5px" width="13" height="24"><path d="M0 0 V23 L12 11.5 Z" fill="#454545"/></svg>
<svg style="position:absolute;left:40px;top:1106px;overflow:visible" width="34" height="32" viewBox="0 0 34 32"><defs><linearGradient id="gtw" x1="0" y1="0" x2="1" y2="0"><stop offset="0" stop-color="#f0f0f0"/><stop offset="1" stop-color="#b8b8b8"/></linearGradient></defs><path d="M17 4 L22 1 H31 V23 L26 26.5 H17 Z" fill="url(#gtw)" stroke="#a4a4a4" stroke-width=".8"/><path d="M24 6 H29 M24 9 H29" stroke="#909090" stroke-width="1"/><circle cx="27.5" cy="15.5" r="1.3" fill="#40b840"/><rect x="1" y="6.5" width="22" height="17.5" rx="1.5" fill="#d4d4d4" stroke="#a0a0a0" stroke-width=".9"/><rect x="3.4" y="9" width="17" height="12" fill="#5c8cd4"/><path d="M5 18 H18" stroke="#86aae0" stroke-width="1"/><path d="M9 24 H15 L16 27.6 H8 Z" fill="#c4c4c4"/><rect x="6" y="27.6" width="12" height="2.2" rx="1" fill="#e0e0e0" stroke="#b0b0b0" stroke-width=".5"/></svg>
<div style="position:absolute;left:76.8px;top:1102.5px;height:40px;line-height:40px;font-size:27.7px;color:#1a1a1a;white-space:pre;letter-spacing:-0.48px;">10.5.5.165</div>
</div>
<div style="position:absolute;left:118px;top:1523px;width:375px;height:3px;background:#ececec;"></div>
<div style="position:absolute;left:490px;top:181px;width:3px;height:148px;background:#f1f1f1;"></div>
<div style="position:absolute;left:512px;top:200px;height:40px;line-height:40px;font-size:32px;color:#333;font-weight:700;white-space:pre;">envmon</div>
<div style="position:absolute;left:646px;top:189px;width:2px;height:62px;background:#dedede;"></div>
<div style="position:absolute;left:844px;top:189px;width:2px;height:62px;background:#dedede;"></div>
<svg style="position:absolute;left:677.0px;top:203.0px;" width="30" height="30" viewBox="0 0 16 16"><rect x="1.2" y="1.8" width="13.6" height="12.6" fill="#fff" stroke="#5f6f8a" stroke-width="1.3"/><rect x="1.2" y="1.8" width="13.6" height="2.4" fill="#8c9cc4" stroke="#5f6f8a" stroke-width="1"/><path d="M2 7 H14 M2 9.4 H14 M2 11.8 H14" stroke="#c0c0c8" stroke-width="1"/><path d="M5.6 4.6 V14" stroke="#a8a8b4" stroke-width=".9"/></svg>
<svg style="position:absolute;left:730.75px;top:203.25px;" width="30.5" height="30.5" viewBox="0 0 16 16"><path d="M1.6 .9 H9.4 L12.6 4.2 V14.4 H1.6 Z" fill="#eef2fb" stroke="#b08820" stroke-width="1" stroke-linejoin="round"/><path d="M9.4 .9 V4.2 H12.6 Z" fill="#e8d898" stroke="#b08820" stroke-width=".7"/><path d="M5.6 3.6 C4.4 3.6 4.6 5 4.6 6 C4.6 6.9 4 7.2 3.4 7.3 C4 7.4 4.6 7.7 4.6 8.6 C4.6 9.6 4.4 11 5.6 11" fill="none" stroke="#2c5c98" stroke-width="1"/><path d="M6.6 6.4 H9.6 M6.6 8.6 H9.6" stroke="#2c5c98" stroke-width="1.2"/><path d="M7.4 10.6 H11.2 V8.6 L15.6 12.2 L11.2 15.8 V13.8 H7.4 Z" fill="#ffd868" stroke="#b87c10" stroke-width=".9" stroke-linejoin="round"/></svg>
<svg style="position:absolute;left:785.0px;top:203.0px;" width="32" height="32" viewBox="0 0 16 16"><defs><linearGradient id="grx" x1="0" y1="0" x2="0" y2="1"><stop offset="0" stop-color="#f46868"/><stop offset="1" stop-color="#e43c44"/></linearGradient></defs><path d="M11.61 2.13 L13.87 4.39 L10.26 8.00 L13.87 11.61 L11.61 13.87 L8.00 10.26 L4.39 13.87 L2.13 11.61 L5.74 8.00 L2.13 4.39 L4.39 2.13 L8.00 5.74 Z" fill="url(#grx)" stroke="#d03840" stroke-width="1.3" stroke-linejoin="round"/></svg>
<div style="position:absolute;left:878px;top:197px;height:40px;line-height:40px;font-size:27.5px;color:#3a3a3a;font-weight:400;white-space:pre;">Tools ▾</div>
<div style="position:absolute;left:998px;top:197px;height:40px;line-height:40px;font-size:27.5px;color:#3a3a3a;font-weight:400;white-space:pre;">Poll ▾</div>
<div style="position:absolute;left:1100px;top:197px;height:40px;line-height:40px;font-size:27.5px;color:#3a3a3a;font-weight:400;white-space:pre;letter-spacing:-0.3px;">Create ▾</div>
<div style="position:absolute;left:502px;top:271px;width:1312px;height:1257px;background:#fafafa;border:2px solid #b9b9b9;border-radius:8px 8px 0 0;"></div>
<div style="position:absolute;left:502px;top:335px;width:1312px;height:2px;background:#b9b9b9;"></div>
<div style="position:absolute;left:680px;top:273px;width:2px;height:62px;background:#c0c0c0;"></div>
<div style="position:absolute;left:822px;top:271px;width:244px;height:66px;background:#fafafa;border:2px solid #b9b9b9;border-bottom:none;border-radius:5px 5px 0 0;"></div>
<svg style="position:absolute;left:509.0px;top:290.0px;" width="32" height="32" viewBox="0 0 16 16"><rect x="2.6" y="1.4" width="3.8" height="3.8" fill="#ffd070" stroke="#b89850" stroke-width=".9"/><rect x="8" y="1.4" width="3.8" height="3.8" fill="#ffe0a0" stroke="#c0a870" stroke-width=".9"/><rect x="2.6" y="6.8" width="3.8" height="3.8" fill="#ffc048" stroke="#a88838" stroke-width=".9"/><rect x="8" y="7" width="5.6" height="8.2" rx="1.8" fill="#88a8dc" stroke="#5878b8" stroke-width=".9"/><rect x="9.6" y="7.6" width="1.8" height="7" fill="#dce8fa"/></svg>
<div style="position:absolute;left:551px;top:285px;height:40px;line-height:40px;font-size:27.5px;color:#333;font-weight:400;white-space:pre;letter-spacing:0.7px;">Overview</div>
<svg style="position:absolute;left:688.0px;top:289.0px;" width="32" height="32" viewBox="0 0 16 16"><path d="M8 1 V2.2" stroke="#222" stroke-width="1.2"/><path d="M1.2 12.4 C3 10.8 3.2 9 3.2 7 C3.2 4 5 2.2 8 2.2 C11 2.2 12.8 4 12.8 7 C12.8 9 13 10.8 14.8 12.4 Z" fill="#ffe066" stroke="#222" stroke-width=".9" stroke-linejoin="round"/><path d="M6.8 13.6 C7.2 14.6 8.8 14.6 9.2 13.6" fill="none" stroke="#222" stroke-width="1"/></svg>
<div style="position:absolute;left:728px;top:285px;height:40px;line-height:40px;font-size:27.5px;color:#333;font-weight:400;white-space:pre;">Alarms</div>
<svg style="position:absolute;left:829.0px;top:287.0px;" width="34" height="34" viewBox="0 0 16 16"><rect x="3.6" y="2.6" width="11.4" height="12" fill="#fff" stroke="#6c94d0" stroke-width="1"/><path d="M9 4.6 H13.6" stroke="#58b058" stroke-width="1"/><path d="M4.6 7 H14 M4.6 9.2 H14 M4.6 11.4 H14 M4.6 13.4 H14" stroke="#a8c4ec" stroke-width="1"/><path d="M7.6 6 V14" stroke="#a8c4ec" stroke-width=".9"/><rect x="1.2" y="1" width="5.4" height="6.6" rx=".8" fill="#e8e8e8" stroke="#aaa" stroke-width=".8"/><rect x="2.4" y="2.6" width="2" height="4" fill="#c4c4c4"/></svg>
<div style="position:absolute;left:870px;top:285px;height:40px;line-height:40px;font-size:27.4px;color:#111;font-weight:400;white-space:pre;">Data Collection</div>
<div style="position:absolute;left:1084px;top:276px;height:40px;line-height:40px;font-size:20px;color:#3c3c3c;font-weight:700;white-space:pre;">»</div>
<div style="position:absolute;left:1098px;top:291px;height:40px;line-height:40px;font-size:19px;color:#5a5a62;font-weight:400;white-space:pre;">7</div>
<svg style="position:absolute;left:1317.0px;top:288.0px;" width="32" height="32" viewBox="0 0 16 16"><defs><linearGradient id="gp" x1="0" y1="0" x2="0" y2="1"><stop offset="0" stop-color="#c4e468"/><stop offset="1" stop-color="#5ca418"/></linearGradient></defs><path d="M5.8 1.6 H10.2 V5.8 H14.4 V10.2 H10.2 V14.4 H5.8 V10.2 H1.6 V5.8 H5.8 Z" fill="url(#gp)" stroke="#4c8c18" stroke-width="1" stroke-linejoin="round"/></svg>
<svg style="position:absolute;left:1371.0px;top:288.0px;" width="32" height="32" viewBox="0 0 16 16"><path d="M4.6 1.2 H11.6 L14.6 4.2 V14.8 H4.6 Z" fill="#fff" stroke="#c8c8c8" stroke-width=".8"/><path d="M11.6 1.2 V4.2 H14.6" fill="none" stroke="#c8c8c8" stroke-width=".8"/><rect x="1.2" y="5.2" width="7" height="7" rx=".6" fill="#1a7c44"/><path d="M3 6.8 L6.4 10.8 M6.4 6.8 L3 10.8" stroke="#fff" stroke-width="1.3"/><text x="9.2" y="11.6" font-family="Liberation Sans" font-size="5.6" fill="#7cc890">a,</text></svg>
<svg style="position:absolute;left:1426.0px;top:286.0px;" width="34" height="34" viewBox="0 0 16 16"><path d="M12 1.2 L14.8 4 L5.4 13.4 L1.4 14.8 L2.8 10.6 Z" fill="#f4bc68" stroke="#d89838" stroke-width=".8" stroke-linejoin="round"/><path d="M2.8 10.6 L5.4 13.4 L1.4 14.8 Z" fill="#d8b088"/><path d="M1.4 14.8 L2 12.8 L3.4 14.2 Z" fill="#5a4030"/><path d="M11 2.6 L13.6 5.2" stroke="#fce0b0" stroke-width="1"/></svg>
<div style="position:absolute;left:1494px;top:278px;width:52px;height:51px;background:#d5d5d5;border-radius:9px;border:1px solid #cfcfcf;"></div>
<svg style="position:absolute;left:1503.0px;top:286.5px;" width="34" height="34" viewBox="0 0 16 16"><defs><linearGradient id="gf" x1="0" y1="0" x2="1" y2="0"><stop offset="0" stop-color="#ffe600"/><stop offset=".45" stop-color="#ffd000"/><stop offset="1" stop-color="#ff9a1a"/></linearGradient></defs><path d="M1.2 1.4 H14.8 L9.6 7.2 V14.6 L6.5 11.4 V7.2 Z" fill="url(#gf)" stroke="#2a1a00" stroke-width="0.9" stroke-linejoin="miter"/><path d="M1.6 1.5 H14.5" stroke="#b87400" stroke-width="1.1"/></svg>
<svg style="position:absolute;left:1559.5px;top:288.0px;" width="31" height="31" viewBox="0 0 16 16"><defs><linearGradient id="gs" x1="0" y1="0" x2="0" y2="1"><stop offset="0" stop-color="#fff2b4"/><stop offset="1" stop-color="#f8c448"/></linearGradient></defs><path d="M6.1 4.7 L10.1 .7 L10.3 2.8 C11.5 2.7 13.2 3 14.3 4.9 C14.9 6 14.9 7.4 13.8 8.9 C13.8 7.6 13.2 6.2 12.4 5.9 C11.8 5.7 11 5.7 10.4 5.8 L10.1 8.5 Z" fill="url(#gs)" stroke="#c8921c" stroke-width="0.9" stroke-linejoin="round"/><path d="M6.1 4.7 L10.1 .7 L10.3 2.8 C11.5 2.7 13.2 3 14.3 4.9 C14.9 6 14.9 7.4 13.8 8.9 C13.8 7.6 13.2 6.2 12.4 5.9 C11.8 5.7 11 5.7 10.4 5.8 L10.1 8.5 Z" transform="rotate(180 8 8.2)" fill="url(#gs)" stroke="#c8921c" stroke-width="0.9" stroke-linejoin="round"/></svg>
<svg style="position:absolute;left:1612.0px;top:287.0px;" width="32" height="32" viewBox="0 0 16 16"><path d="M9.4 1.4 L14.6 6.2" stroke="#222" stroke-width="1.1" fill="none"/><path d="M4.4 6.6 L10.4 3.2 L12.8 5.4 L10 11.6 L7.2 9.2 Z" fill="none" stroke="#222" stroke-width="1.1" stroke-linejoin="round"/><path d="M7.2 9.2 L1.4 14.8" stroke="#222" stroke-width="1.1" fill="none"/></svg>
<svg style="position:absolute;left:1660px;top:297px;" width="24" height="14" viewBox="0 0 24 14"><path d="M0 0 H24 L12 13 Z" fill="#333"/></svg>
<svg style="position:absolute;left:1702.0px;top:287.0px;" width="32" height="32" viewBox="0 0 16 16"><path d="M8.4 3 H1.8 V14.4 H13 V8" fill="none" stroke="#222" stroke-width="1.15"/><path d="M6.8 9.4 L14.6 1.6 M9.2 1.4 H14.8 V7" fill="none" stroke="#222" stroke-width="1.15"/><path d="M2.4 15 H13.6 V8.6" fill="none" stroke="#999" stroke-width=".7"/></svg>
<svg style="position:absolute;left:1756.0px;top:287.0px;" width="32" height="32" viewBox="0 0 16 16"><circle cx="8" cy="3.15" r="1.95" fill="none" stroke="#222" stroke-width=".95"/><circle cx="8" cy="8" r="1.95" fill="none" stroke="#222" stroke-width=".95"/><circle cx="8" cy="12.85" r="1.95" fill="none" stroke="#222" stroke-width=".95"/></svg>
<div style="position:absolute;left:504px;top:337px;width:1308px;height:1189px;background:#fff;"></div>
<div style="position:absolute;left:504px;top:337px;width:1308px;height:87px;background:#fafafa;"></div>
<div style="position:absolute;left:518px;top:352px;width:1187px;height:63px;background:#fff;border:2px solid #c4c4c4;border-radius:3px;box-shadow:inset 0 1px 2px rgba(0,0,0,.08);"></div>
<div style="position:absolute;left:535px;top:363px;height:40px;line-height:40px;font-size:27.5px;color:#9a9a9a;font-weight:400;white-space:pre;">Filter is empty</div>
<svg style="position:absolute;left:1724.0px;top:368.0px;" width="32" height="32" viewBox="0 0 16 16"><defs><linearGradient id="ge" x1="0" y1="0" x2="0" y2="1"><stop offset="0" stop-color="#fff"/><stop offset="1" stop-color="#d8c8b0"/></linearGradient></defs><path d="M6.4 2.4 H12 L7.4 13.4 H1.8 Z" fill="url(#ge)" stroke="#b8a890" stroke-width=".9" stroke-linejoin="round"/><path d="M4.6 7.6 H9.6" stroke="#b0a088" stroke-width=".8"/><path d="M8.4 13.6 H14.4" stroke="#8a7a70" stroke-width="1"/></svg>
<svg style="position:absolute;left:1767.0px;top:367.0px;" width="32" height="32" viewBox="0 0 16 16"><path d="M11.96 1.92 L14.08 4.04 L10.12 8.00 L14.08 11.96 L11.96 14.08 L8.00 10.12 L4.04 14.08 L1.92 11.96 L5.88 8.00 L1.92 4.04 L4.04 1.92 L8.00 5.88 Z" fill="#7c7c7c" stroke="#4c4c4c" stroke-width="1.3" stroke-linejoin="round"/></svg>
<div style="position:absolute;left:510px;top:489px;width:1296px;height:2px;background:#f0f0f0;"></div>
<div style="position:absolute;left:647px;top:424px;width:1px;height:465px;background:#f4f4f4;"></div>
<div style="position:absolute;left:1049px;top:424px;width:1px;height:465px;background:#f4f4f4;"></div>
<div style="position:absolute;left:1198px;top:424px;width:1px;height:465px;background:#f4f4f4;"></div>
<div style="position:absolute;left:1517px;top:424px;width:1px;height:465px;background:#f4f4f4;"></div>
<div style="position:absolute;left:1806px;top:490px;width:1px;height:1036px;background:#e6e6e6;"></div>
<div style="position:absolute;left:517px;top:437px;height:40px;line-height:40px;font-size:27px;color:#a3a3a3;font-weight:700;white-space:pre;">ID</div>
<div style="position:absolute;left:657px;top:437px;height:40px;line-height:40px;font-size:27px;color:#a3a3a3;font-weight:700;white-space:pre;">Description</div>
<div style="position:absolute;left:1058px;top:437px;height:40px;line-height:40px;font-size:27px;color:#a3a3a3;font-weight:700;white-space:pre;">Value</div>
<div style="position:absolute;left:1209px;top:437px;height:40px;line-height:40px;font-size:27px;color:#a3a3a3;font-weight:700;white-space:pre;">Timestamp</div>
<div style="position:absolute;left:1526px;top:437px;height:40px;line-height:40px;font-size:27px;color:#a3a3a3;font-weight:700;white-space:pre;">Threshold</div>
<svg style="position:absolute;left:610px;top:451px;" width="24" height="13" viewBox="0 0 24 13"><path d="M0 0 H23 L11.5 12 Z" fill="#a0a0a0"/></svg>
<div style="position:absolute;left:517px;top:503px;width:21px;height:21px;background:linear-gradient(#1fe000,#3fae12);"></div>
<div style="position:absolute;left:549px;top:493px;height:40px;line-height:40px;font-size:27.5px;color:#111;font-weight:400;white-space:pre;letter-spacing:-0.11px;">14941</div>
<div style="position:absolute;left:657px;top:493px;height:40px;line-height:40px;font-size:28px;color:#111;font-weight:400;white-space:pre;letter-spacing:-0.11px;">Average A/C current</div>
<div style="position:absolute;left:1058px;top:493px;height:40px;line-height:40px;font-size:27.5px;color:#111;font-weight:400;white-space:pre;letter-spacing:-0.26px;">1.26 A</div>
<div style="position:absolute;left:1209px;top:493px;height:40px;line-height:40px;font-size:27.4px;color:#111;font-weight:400;white-space:pre;letter-spacing:-0.02px;">14.06.2023 14:00:00</div>
<svg style="position:absolute;left:1522.0px;top:498.0px;" width="30" height="30" viewBox="0 0 16 16"><defs><radialGradient id="go" cx=".4" cy=".3" r=".8"><stop offset="0" stop-color="#8cd878"/><stop offset="1" stop-color="#3c9c30"/></radialGradient></defs><circle cx="8" cy="8" r="7" fill="url(#go)" stroke="#58a848" stroke-width=".6"/><path d="M4.4 8.2 L7 10.8 L11.6 5.6" fill="none" stroke="#fff" stroke-width="2" stroke-linecap="round" stroke-linejoin="round"/></svg>
<div style="position:absolute;left:1557px;top:493px;height:40px;line-height:40px;font-size:27.5px;color:#111;font-weight:400;white-space:pre;">OK</div>
<div style="position:absolute;left:517px;top:547px;width:21px;height:21px;background:linear-gradient(#1fe000,#3fae12);"></div>
<div style="position:absolute;left:549px;top:537px;height:40px;line-height:40px;font-size:27.5px;color:#111;font-weight:400;white-space:pre;letter-spacing:-0.11px;">14935</div>
<div style="position:absolute;left:657px;top:537px;height:40px;line-height:40px;font-size:28px;color:#111;font-weight:400;white-space:pre;letter-spacing:-0.55px;">A/C Power</div>
<div style="position:absolute;left:1058px;top:537px;height:40px;line-height:40px;font-size:27.5px;color:#111;font-weight:400;white-space:pre;letter-spacing:-0.27px;">0.29 kW/h</div>
<div style="position:absolute;left:1209px;top:537px;height:40px;line-height:40px;font-size:27.4px;color:#111;font-weight:400;white-space:pre;letter-spacing:-0.02px;">14.06.2023 14:04:39</div>
<svg style="position:absolute;left:1522.0px;top:542.0px;" width="30" height="30" viewBox="0 0 16 16"><defs><radialGradient id="go" cx=".4" cy=".3" r=".8"><stop offset="0" stop-color="#8cd878"/><stop offset="1" stop-color="#3c9c30"/></radialGradient></defs><circle cx="8" cy="8" r="7" fill="url(#go)" stroke="#58a848" stroke-width=".6"/><path d="M4.4 8.2 L7 10.8 L11.6 5.6" fill="none" stroke="#fff" stroke-width="2" stroke-linecap="round" stroke-linejoin="round"/></svg>
<div style="position:absolute;left:1557px;top:537px;height:40px;line-height:40px;font-size:27.5px;color:#111;font-weight:400;white-space:pre;">OK</div>
<div style="position:absolute;left:517px;top:591px;width:21px;height:21px;background:linear-gradient(#1fe000,#3fae12);"></div>
<div style="position:absolute;left:549px;top:581px;height:40px;line-height:40px;font-size:27.5px;color:#111;font-weight:400;white-space:pre;letter-spacing:-0.11px;">14934</div>
<div style="position:absolute;left:657px;top:581px;height:40px;line-height:40px;font-size:28px;color:#111;font-weight:400;white-space:pre;letter-spacing:-0.96px;">VIN</div>
<div style="position:absolute;left:1058px;top:581px;height:40px;line-height:40px;font-size:27.5px;color:#111;font-weight:400;white-space:pre;letter-spacing:-0.15px;">11.64 V</div>
<div style="position:absolute;left:1209px;top:581px;height:40px;line-height:40px;font-size:27.4px;color:#111;font-weight:400;white-space:pre;letter-spacing:-0.02px;">14.06.2023 14:35:14</div>
<svg style="position:absolute;left:1522.0px;top:586.0px;" width="30" height="30" viewBox="0 0 16 16"><defs><radialGradient id="go" cx=".4" cy=".3" r=".8"><stop offset="0" stop-color="#8cd878"/><stop offset="1" stop-color="#3c9c30"/></radialGradient></defs><circle cx="8" cy="8" r="7" fill="url(#go)" stroke="#58a848" stroke-width=".6"/><path d="M4.4 8.2 L7 10.8 L11.6 5.6" fill="none" stroke="#fff" stroke-width="2" stroke-linecap="round" stroke-linejoin="round"/></svg>
<div style="position:absolute;left:1557px;top:581px;height:40px;line-height:40px;font-size:27.5px;color:#111;font-weight:400;white-space:pre;">OK</div>
<div style="position:absolute;left:517px;top:635px;width:21px;height:21px;background:linear-gradient(#1fe000,#3fae12);"></div>
<div style="position:absolute;left:549px;top:625px;height:40px;line-height:40px;font-size:27.5px;color:#111;font-weight:400;white-space:pre;letter-spacing:-0.11px;">14932</div>
<div style="position:absolute;left:657px;top:625px;height:40px;line-height:40px;font-size:28px;color:#111;font-weight:400;white-space:pre;letter-spacing:-0.44px;">A/C current (INPA3)</div>
<div style="position:absolute;left:1058px;top:625px;height:40px;line-height:40px;font-size:27.5px;color:#111;font-weight:400;white-space:pre;letter-spacing:-0.26px;">1.27 A</div>
<div style="position:absolute;left:1209px;top:625px;height:40px;line-height:40px;font-size:27.4px;color:#111;font-weight:400;white-space:pre;letter-spacing:-0.02px;">14.06.2023 14:35:41</div>
<svg style="position:absolute;left:1522.0px;top:630.0px;" width="30" height="30" viewBox="0 0 16 16"><defs><radialGradient id="go" cx=".4" cy=".3" r=".8"><stop offset="0" stop-color="#8cd878"/><stop offset="1" stop-color="#3c9c30"/></radialGradient></defs><circle cx="8" cy="8" r="7" fill="url(#go)" stroke="#58a848" stroke-width=".6"/><path d="M4.4 8.2 L7 10.8 L11.6 5.6" fill="none" stroke="#fff" stroke-width="2" stroke-linecap="round" stroke-linejoin="round"/></svg>
<div style="position:absolute;left:1557px;top:625px;height:40px;line-height:40px;font-size:27.5px;color:#111;font-weight:400;white-space:pre;">OK</div>
<div style="position:absolute;left:517px;top:679px;width:21px;height:21px;background:linear-gradient(#1fe000,#3fae12);"></div>
<div style="position:absolute;left:549px;top:669px;height:40px;line-height:40px;font-size:27.5px;color:#111;font-weight:400;white-space:pre;letter-spacing:-0.11px;">14931</div>
<div style="position:absolute;left:657px;top:669px;height:40px;line-height:40px;font-size:28px;color:#111;font-weight:400;white-space:pre;letter-spacing:-0.52px;">Water sensor 2 (INPA2)</div>
<div style="position:absolute;left:1058px;top:669px;height:40px;line-height:40px;font-size:27.5px;color:#111;font-weight:400;white-space:pre;letter-spacing:-0.75px;">3.29 V</div>
<div style="position:absolute;left:1209px;top:669px;height:40px;line-height:40px;font-size:27.4px;color:#111;font-weight:400;white-space:pre;letter-spacing:-0.02px;">14.06.2023 14:35:14</div>
<svg style="position:absolute;left:1522.0px;top:674.0px;" width="30" height="30" viewBox="0 0 16 16"><defs><radialGradient id="go" cx=".4" cy=".3" r=".8"><stop offset="0" stop-color="#8cd878"/><stop offset="1" stop-color="#3c9c30"/></radialGradient></defs><circle cx="8" cy="8" r="7" fill="url(#go)" stroke="#58a848" stroke-width=".6"/><path d="M4.4 8.2 L7 10.8 L11.6 5.6" fill="none" stroke="#fff" stroke-width="2" stroke-linecap="round" stroke-linejoin="round"/></svg>
<div style="position:absolute;left:1557px;top:669px;height:40px;line-height:40px;font-size:27.5px;color:#111;font-weight:400;white-space:pre;">OK</div>
<div style="position:absolute;left:517px;top:723px;width:21px;height:21px;background:linear-gradient(#1fe000,#3fae12);"></div>
<div style="position:absolute;left:549px;top:713px;height:40px;line-height:40px;font-size:27.5px;color:#111;font-weight:400;white-space:pre;letter-spacing:-0.11px;">14930</div>
<div style="position:absolute;left:657px;top:713px;height:40px;line-height:40px;font-size:28px;color:#111;font-weight:400;white-space:pre;letter-spacing:-0.52px;">Water sensor 1 (INPA1)</div>
<div style="position:absolute;left:1058px;top:713px;height:40px;line-height:40px;font-size:27.5px;color:#111;font-weight:400;white-space:pre;letter-spacing:-0.75px;">3.29 V</div>
<div style="position:absolute;left:1209px;top:713px;height:40px;line-height:40px;font-size:27.4px;color:#111;font-weight:400;white-space:pre;letter-spacing:-0.02px;">14.06.2023 14:35:07</div>
<svg style="position:absolute;left:1522.0px;top:718.0px;" width="30" height="30" viewBox="0 0 16 16"><defs><radialGradient id="go" cx=".4" cy=".3" r=".8"><stop offset="0" stop-color="#8cd878"/><stop offset="1" stop-color="#3c9c30"/></radialGradient></defs><circle cx="8" cy="8" r="7" fill="url(#go)" stroke="#58a848" stroke-width=".6"/><path d="M4.4 8.2 L7 10.8 L11.6 5.6" fill="none" stroke="#fff" stroke-width="2" stroke-linecap="round" stroke-linejoin="round"/></svg>
<div style="position:absolute;left:1557px;top:713px;height:40px;line-height:40px;font-size:27.5px;color:#111;font-weight:400;white-space:pre;">OK</div>
<div style="position:absolute;left:517px;top:767px;width:21px;height:21px;background:linear-gradient(#1fe000,#3fae12);"></div>
<div style="position:absolute;left:549px;top:757px;height:40px;line-height:40px;font-size:27.5px;color:#111;font-weight:400;white-space:pre;letter-spacing:-0.11px;">14929</div>
<div style="position:absolute;left:657px;top:757px;height:40px;line-height:40px;font-size:28px;color:#111;font-weight:400;white-space:pre;letter-spacing:0.12px;">Server room temperature</div>
<div style="position:absolute;left:1058px;top:757px;height:40px;line-height:40px;font-size:27.5px;color:#111;font-weight:400;white-space:pre;letter-spacing:-1.2px;">19.1 °C</div>
<div style="position:absolute;left:1209px;top:757px;height:40px;line-height:40px;font-size:27.4px;color:#111;font-weight:400;white-space:pre;letter-spacing:-0.02px;">14.06.2023 14:35:04</div>
<svg style="position:absolute;left:1522.0px;top:762.0px;" width="30" height="30" viewBox="0 0 16 16"><defs><radialGradient id="go" cx=".4" cy=".3" r=".8"><stop offset="0" stop-color="#8cd878"/><stop offset="1" stop-color="#3c9c30"/></radialGradient></defs><circle cx="8" cy="8" r="7" fill="url(#go)" stroke="#58a848" stroke-width=".6"/><path d="M4.4 8.2 L7 10.8 L11.6 5.6" fill="none" stroke="#fff" stroke-width="2" stroke-linecap="round" stroke-linejoin="round"/></svg>
<div style="position:absolute;left:1557px;top:757px;height:40px;line-height:40px;font-size:27.5px;color:#111;font-weight:400;white-space:pre;">OK</div>
<div style="position:absolute;left:517px;top:811px;width:21px;height:21px;background:linear-gradient(#1fe000,#3fae12);"></div>
<div style="position:absolute;left:549px;top:801px;height:40px;line-height:40px;font-size:27.5px;color:#111;font-weight:400;white-space:pre;letter-spacing:-0.11px;">14928</div>
<div style="position:absolute;left:657px;top:801px;height:40px;line-height:40px;font-size:28px;color:#111;font-weight:400;white-space:pre;letter-spacing:0.14px;">Heating pipe temperature</div>
<div style="position:absolute;left:1058px;top:801px;height:40px;line-height:40px;font-size:27.5px;color:#111;font-weight:400;white-space:pre;letter-spacing:-1.54px;">18 °C</div>
<div style="position:absolute;left:1209px;top:801px;height:40px;line-height:40px;font-size:27.4px;color:#111;font-weight:400;white-space:pre;letter-spacing:-0.02px;">14.06.2023 14:35:02</div>
<svg style="position:absolute;left:1522.0px;top:806.0px;" width="30" height="30" viewBox="0 0 16 16"><defs><radialGradient id="go" cx=".4" cy=".3" r=".8"><stop offset="0" stop-color="#8cd878"/><stop offset="1" stop-color="#3c9c30"/></radialGradient></defs><circle cx="8" cy="8" r="7" fill="url(#go)" stroke="#58a848" stroke-width=".6"/><path d="M4.4 8.2 L7 10.8 L11.6 5.6" fill="none" stroke="#fff" stroke-width="2" stroke-linecap="round" stroke-linejoin="round"/></svg>
<div style="position:absolute;left:1557px;top:801px;height:40px;line-height:40px;font-size:27.5px;color:#111;font-weight:400;white-space:pre;">OK</div>
<div style="position:absolute;left:517px;top:855px;width:21px;height:21px;background:linear-gradient(#1fe000,#3fae12);"></div>
<div style="position:absolute;left:549px;top:845px;height:40px;line-height:40px;font-size:27.5px;color:#111;font-weight:400;white-space:pre;letter-spacing:-0.11px;">14927</div>
<div style="position:absolute;left:657px;top:845px;height:40px;line-height:40px;font-size:28px;color:#111;font-weight:400;white-space:pre;letter-spacing:0.23px;">Outside temperature</div>
<div style="position:absolute;left:1058px;top:845px;height:40px;line-height:40px;font-size:27.5px;color:#111;font-weight:400;white-space:pre;letter-spacing:-1.2px;">23.5 °C</div>
<div style="position:absolute;left:1209px;top:845px;height:40px;line-height:40px;font-size:27.4px;color:#111;font-weight:400;white-space:pre;letter-spacing:-0.02px;">14.06.2023 14:34:54</div>
<svg style="position:absolute;left:1522.0px;top:850.0px;" width="30" height="30" viewBox="0 0 16 16"><defs><radialGradient id="go" cx=".4" cy=".3" r=".8"><stop offset="0" stop-color="#8cd878"/><stop offset="1" stop-color="#3c9c30"/></radialGradient></defs><circle cx="8" cy="8" r="7" fill="url(#go)" stroke="#58a848" stroke-width=".6"/><path d="M4.4 8.2 L7 10.8 L11.6 5.6" fill="none" stroke="#fff" stroke-width="2" stroke-linecap="round" stroke-linejoin="round"/></svg>
<div style="position:absolute;left:1557px;top:845px;height:40px;line-height:40px;font-size:27.5px;color:#111;font-weight:400;white-space:pre;">OK</div>
<div style="position:absolute;left:116px;top:1535px;width:1698px;height:578px;background:#fff;border:2px solid #b9b9b9;border-radius:8px 8px 0 0;"></div>
<div style="position:absolute;left:118px;top:1537px;width:1694px;height:63px;background:#fafafa;border-radius:8px 8px 0 0;"></div>
<div style="position:absolute;left:458px;top:1599px;width:1356px;height:2px;background:#b9b9b9;"></div>
<div style="position:absolute;left:116px;top:1535px;width:344px;height:66px;background:#fafafa;border:2px solid #b9b9b9;border-bottom:none;border-radius:8px 4px 0 0;"></div>
<svg style="position:absolute;left:125.0px;top:1555.5px;" width="30" height="30" viewBox="0 0 16 16"><path d="M1.6 .8 V14.4 H15.6" fill="none" stroke="#555" stroke-width=".9"/><path d="M.6 2 L1.6 .6 L2.6 2 M14.4 13.6 L15.8 14.4 L14.4 15.2" fill="none" stroke="#555" stroke-width=".7"/><path d="M2.6 12.4 L6.4 7.4 L8.4 9.6 L13.2 4" fill="none" stroke="#4c78a8" stroke-width="1"/></svg>
<div style="position:absolute;left:164px;top:1549.5px;height:40px;line-height:40px;font-size:27.5px;color:#111;font-weight:400;white-space:pre;">envmon: A/C Power</div>
<svg style="position:absolute;left:424.5px;top:1559px;" width="22" height="22" viewBox="0 0 22 22"><path d="M2 2 L20 20 M20 2 L2 20" stroke="#1c1c1c" stroke-width="2.2" fill="none"/></svg>
<svg style="position:absolute;left:1274.0px;top:1553.0px;" width="28" height="28" viewBox="0 0 16 16"><circle cx="6.4" cy="6.4" r="5" fill="#fdfdf6" stroke="#a89048" stroke-width="1.1"/><path d="M10.2 10.2 L14.6 14.4" stroke="#8a6a50" stroke-width="1.8" stroke-linecap="round"/><path d="M10 10 L12 12" stroke="#b0a890" stroke-width="1.6"/><path d="M3.8 6.4 H9" stroke="#2838b0" stroke-width="1.6"/><path d="M6.4 3.8 V9" stroke="#2838b0" stroke-width="1.6"/></svg>
<svg style="position:absolute;left:1328.0px;top:1553.0px;" width="28" height="28" viewBox="0 0 16 16"><circle cx="6.4" cy="6.4" r="5" fill="#fdfdf6" stroke="#a89048" stroke-width="1.1"/><path d="M10.2 10.2 L14.6 14.4" stroke="#8a6a50" stroke-width="1.8" stroke-linecap="round"/><path d="M10 10 L12 12" stroke="#b0a890" stroke-width="1.6"/><path d="M3.8 6.4 H9" stroke="#2838b0" stroke-width="1.6"/></svg>
<div style="position:absolute;left:1382px;top:1540px;width:2px;height:54px;background:#dedede;"></div>
<svg style="position:absolute;left:1409.0px;top:1551.0px;" width="32" height="32" viewBox="0 0 16 16"><rect x="1" y="1.2" width="14.4" height="14.2" rx="1" fill="#b8cce8" stroke="#6888c0" stroke-width=".9"/><rect x="4.17" y="1.7" width="8.06" height="6.25" fill="#eef0f0" stroke="#a8b0b8" stroke-width=".5"/><path d="M5.32 3.61 H11.08 M5.32 5.46 H11.08" stroke="#c4c8cc" stroke-width=".7"/><rect x="4.74" y="10.00" width="7.20" height="5.00" fill="#dce6f6" stroke="#5070b0" stroke-width=".8"/><rect x="8.78" y="11.14" width="2.02" height="3.41" fill="#5070b0"/></svg>
<svg style="position:absolute;left:1462.0px;top:1551.0px;" width="32" height="32" viewBox="0 0 16 16"><rect x="0.8" y="1" width="11.6" height="11.4" rx="1" fill="#b8cce8" stroke="#6888c0" stroke-width=".9"/><rect x="3.35" y="1.5" width="6.50" height="5.02" fill="#eef0f0" stroke="#a8b0b8" stroke-width=".5"/><path d="M4.28 2.94 H8.92 M4.28 4.42 H8.92" stroke="#c4c8cc" stroke-width=".7"/><rect x="3.82" y="8.07" width="5.80" height="3.93" fill="#dce6f6" stroke="#5070b0" stroke-width=".8"/><rect x="7.06" y="8.98" width="1.62" height="2.74" fill="#5070b0"/><path d="M8.2 14.6 H10 M10.8 14.6 H12.6 M13.4 14.6 H15.2" stroke="#3858b0" stroke-width="1.6"/></svg>
<svg style="position:absolute;left:1516.0px;top:1551.0px;" width="32" height="32" viewBox="0 0 16 16"><rect x="1.2" y="1.2" width="13.6" height="13.2" fill="#e8e8e4" stroke="#a89858" stroke-width="1"/><rect x="2.4" y="2.4" width="11.2" height="10.8" fill="#5c98d8"/><path d="M2.4 13.2 V8 L5 5 L8 9 L10 7.4 L13.6 11 V13.2 Z" fill="#d8dce4"/><path d="M4.6 4 L7.6 8.6 L6.4 12.6 L8.6 11 L9.4 13 L10 9 L7.4 4.4 Z" fill="#c83028"/><path d="M8 5 L10.6 9 L12 12.8 L9.6 12.8 Z" fill="#f0f0f0"/></svg>
<svg style="position:absolute;left:1570.0px;top:1551.0px;" width="32" height="32" viewBox="0 0 16 16"><path d="M1.2 1.2 H7.4 L9.6 3.4000000000000004 V12.2 H1.2 Z" fill="#fff" stroke="#888" stroke-width=".9"/><path d="M2.8 4.8 H8.0" stroke="#188878" stroke-width="1.1"/><path d="M2.8 6.6000000000000005 H8.0" stroke="#188878" stroke-width="1.1"/><path d="M2.8 8.4 H8.0" stroke="#188878" stroke-width="1.1"/><path d="M2.8 10.2 H8.0" stroke="#188878" stroke-width="1.1"/><path d="M6.4 3.8 H12.600000000000001 L14.8 6.0 V14.8 H6.4 Z" fill="#fff" stroke="#888" stroke-width=".9"/><path d="M8.0 7.4 H13.2" stroke="#188878" stroke-width="1.1"/><path d="M8.0 9.2 H13.2" stroke="#188878" stroke-width="1.1"/><path d="M8.0 11.0 H13.2" stroke="#188878" stroke-width="1.1"/><path d="M8.0 12.8 H13.2" stroke="#188878" stroke-width="1.1"/></svg>
<svg style="position:absolute;left:1649.5px;top:1551.5px;" width="31" height="31" viewBox="0 0 16 16"><defs><linearGradient id="gs" x1="0" y1="0" x2="0" y2="1"><stop offset="0" stop-color="#fff2b4"/><stop offset="1" stop-color="#f8c448"/></linearGradient></defs><path d="M6.1 4.7 L10.1 .7 L10.3 2.8 C11.5 2.7 13.2 3 14.3 4.9 C14.9 6 14.9 7.4 13.8 8.9 C13.8 7.6 13.2 6.2 12.4 5.9 C11.8 5.7 11 5.7 10.4 5.8 L10.1 8.5 Z" fill="url(#gs)" stroke="#c8921c" stroke-width="0.9" stroke-linejoin="round"/><path d="M6.1 4.7 L10.1 .7 L10.3 2.8 C11.5 2.7 13.2 3 14.3 4.9 C14.9 6 14.9 7.4 13.8 8.9 C13.8 7.6 13.2 6.2 12.4 5.9 C11.8 5.7 11 5.7 10.4 5.8 L10.1 8.5 Z" transform="rotate(180 8 8.2)" fill="url(#gs)" stroke="#c8921c" stroke-width="0.9" stroke-linejoin="round"/></svg>
<svg style="position:absolute;left:1702.0px;top:1551.0px;" width="32" height="32" viewBox="0 0 16 16"><path d="M8.4 3 H1.8 V14.4 H13 V8" fill="none" stroke="#222" stroke-width="1.15"/><path d="M6.8 9.4 L14.6 1.6 M9.2 1.4 H14.8 V7" fill="none" stroke="#222" stroke-width="1.15"/><path d="M2.4 15 H13.6 V8.6" fill="none" stroke="#999" stroke-width=".7"/></svg>
<svg style="position:absolute;left:1756.0px;top:1551.0px;" width="32" height="32" viewBox="0 0 16 16"><circle cx="8" cy="3.15" r="1.95" fill="none" stroke="#222" stroke-width=".95"/><circle cx="8" cy="8" r="1.95" fill="none" stroke="#222" stroke-width=".95"/><circle cx="8" cy="12.85" r="1.95" fill="none" stroke="#222" stroke-width=".95"/></svg>
<svg style="position:absolute;left:118px;top:1601px" width="1694" height="399" viewBox="118 1601 1694 399"><path d="M222 1713.8 H1787" stroke="#e5e5e5" stroke-width="1.6" stroke-dasharray="6 6" fill="none"/><path d="M222 1803.5 H1787" stroke="#e5e5e5" stroke-width="1.6" stroke-dasharray="6 6" fill="none"/><path d="M222 1893.8 H1787" stroke="#e5e5e5" stroke-width="1.6" stroke-dasharray="6 6" fill="none"/><path d="M250.8 1629 V1982" stroke="#e5e5e5" stroke-width="1.6" stroke-dasharray="6 6" fill="none"/><path d="M250.8 1984 V1993.7" stroke="#111" stroke-width="2" fill="none"/><path d="M380.9 1629 V1982" stroke="#e5e5e5" stroke-width="1.6" stroke-dasharray="6 6" fill="none"/><path d="M380.9 1984 V1993.7" stroke="#111" stroke-width="2" fill="none"/><path d="M511 1629 V1982" stroke="#e5e5e5" stroke-width="1.6" stroke-dasharray="6 6" fill="none"/><path d="M511 1984 V1993.7" stroke="#111" stroke-width="2" fill="none"/><path d="M641 1629 V1982" stroke="#e5e5e5" stroke-width="1.6" stroke-dasharray="6 6" fill="none"/><path d="M641 1984 V1993.7" stroke="#111" stroke-width="2" fill="none"/><path d="M771 1629 V1982" stroke="#e5e5e5" stroke-width="1.6" stroke-dasharray="6 6" fill="none"/><path d="M771 1984 V1993.7" stroke="#111" stroke-width="2" fill="none"/><path d="M900.5 1629 V1982" stroke="#e5e5e5" stroke-width="1.6" stroke-dasharray="6 6" fill="none"/><path d="M900.5 1984 V1993.7" stroke="#111" stroke-width="2" fill="none"/><path d="M1030.5 1629 V1982" stroke="#e5e5e5" stroke-width="1.6" stroke-dasharray="6 6" fill="none"/><path d="M1030.5 1984 V1993.7" stroke="#111" stroke-width="2" fill="none"/><path d="M1160.5 1629 V1982" stroke="#e5e5e5" stroke-width="1.6" stroke-dasharray="6 6" fill="none"/><path d="M1160.5 1984 V1993.7" stroke="#111" stroke-width="2" fill="none"/><path d="M1290.5 1629 V1982" stroke="#e5e5e5" stroke-width="1.6" stroke-dasharray="6 6" fill="none"/><path d="M1290.5 1984 V1993.7" stroke="#111" stroke-width="2" fill="none"/><path d="M1420 1629 V1982" stroke="#e5e5e5" stroke-width="1.6" stroke-dasharray="6 6" fill="none"/><path d="M1420 1984 V1993.7" stroke="#111" stroke-width="2" fill="none"/><path d="M1549 1629 V1982" stroke="#e5e5e5" stroke-width="1.6" stroke-dasharray="6 6" fill="none"/><path d="M1549 1984 V1993.7" stroke="#111" stroke-width="2" fill="none"/><path d="M1678.5 1629 V1982" stroke="#e5e5e5" stroke-width="1.6" stroke-dasharray="6 6" fill="none"/><path d="M1678.5 1984 V1993.7" stroke="#111" stroke-width="2" fill="none"/><path d="M219 1626 V1982.4" stroke="#111" stroke-width="2" fill="none"/><path d="M220.8 1983.3 H1787" stroke="#111" stroke-width="2" fill="none"/><path d="M207 1713.8 H217" stroke="#111" stroke-width="2" fill="none"/><path d="M207 1803.5 H217" stroke="#111" stroke-width="2" fill="none"/><path d="M207 1893.8 H217" stroke="#111" stroke-width="2" fill="none"/><path d="M207 1981.9 H217" stroke="#111" stroke-width="2" fill="none"/><path d="M224.2 1711.1 L232.1 1714.6 L241.6 1716.6 L251.1 1716.6 L260.6 1719 L270 1723 L279.5 1728.5 L288.2 1734.8 L297.7 1738.8 L307.9 1681.1 L314.3 1665.3 L326.1 1640.8 L335.6 1642.7 L353.8 1655.8 L364 1633.7 L372.7 1651.1 L391.7 1704 L409.8 1734.8 L419.3 1736.9 L428 1733.2 L447 1721.4 L455.7 1723 L465.9 1721.1 L475.4 1722.5 L484.9 1726.9 L494.4 1726.9 L503 1728.5 L511.7 1739.9 L522 1710.8 L531.5 1712.7 L540.2 1720.6 L549.7 1734.8 L559.9 1740.3 L567.8 1685.8 L578.1 1641.6 L587.6 1652.3 L596.3 1645.5 L605.8 1656.6 L615.3 1675.6 L624 1695.3 L634.2 1708.3 L644.5 1696.9 L652.4 1696.6 L661.9 1692.9 L672.1 1700.8 L680 1700.8 L690.3 1692.9 L700.6 1692.9 L707.7 1694.8 L718 1700.5 L728.2 1695 L736.9 1692.9 L746.4 1690.9 L755.9 1685.8 L763.8 1651.9 L773.6 1635.3 L784.3 1650.3 L801.7 1639.2 L811.2 1648.4 L819.9 1658.2 L830.1 1646.7 L839.6 1639.5 L848.3 1654.2 L857.8 1704 L868.4 1691.4 L876.7 1698.8 L886.2 1701.2 L895.7 1708.7 L904.4 1714.7 L913.9 1717 L942.3 1717 L951.8 1720.6 L961.2 1727.7 L980.2 1738.3 L988.2 1655.8 L998.4 1641.6 L1007.9 1648.4 L1016.1 1646.7 L1036.4 1662.9 L1043.5 1662.9 L1053.7 1644.8 L1063.7 1633.7 L1071.9 1682.7 L1081.8 1711.9 L1091.6 1701.3 L1100.3 1716.2 L1109.8 1711.1 L1119.8 1730.1 L1128.8 1710.8 L1156.4 1717 L1165.9 1717 L1175.4 1720.6 L1184.1 1726.9 L1193.5 1738 L1203.8 1679.5 L1211.7 1684.2 L1222 1668.9 L1231.5 1668.9 L1240.1 1647.1 L1249.6 1647.1 L1259.9 1654.2 L1268.6 1640.5 L1278.1 1640.5 L1288.3 1690.6 L1305.7 1744 L1316 1723.4 L1324.7 1734.8 L1334.1 1742.4 L1343.6 1739.2 L1351.5 1744.3 L1361.5 1715.2 L1372 1702.9 L1380.8 1705.2 L1407.3 1716.1 L1418.7 1727.2 L1429.3 1731.3 L1455.2 1736.6 L1464.2 1714 L1474.3 1645.8 L1501.6 1679.6 L1512.2 1694.6 L1520.1 1707.3 L1529.8 1734.8 L1540.4 1738.7 L1558 1738.7 L1567.7 1735.1 L1575.6 1742.5 L1586.2 1744.8 L1595.9 1754.2 L1604.7 1736.6 L1614 1701.1 L1622.3 1705.7 L1632 1712.2 L1659.3 1728.4 L1669 1730.7 L1679.3 1734.8 L1687.5 1734.8 L1698.1 1738.7 L1707.8 1736.6 L1717.5 1725.5 L1726.3 1717.2 L1735.7 1709.9 L1743.9 1742.2 L1754.5 1730.7 L1771.3 1726.3 L1781.3 1721.4" stroke="#3f6a9c" stroke-width="4.6" fill="none" stroke-linejoin="round" stroke-linecap="butt"/></svg>
<div style="position:absolute;left:118px;top:1615.5px;width:120px;height:40px;overflow:hidden;">
<div style="position:absolute;left:35.3px;top:-12px;font-size:28px;line-height:40px;color:#222;letter-spacing:-0.95px;">400</div></div>
<div style="position:absolute;left:153.3px;top:1693.1px;height:40px;line-height:40px;font-size:28px;color:#222;font-weight:400;white-space:pre;letter-spacing:-0.95px;">300</div>
<div style="position:absolute;left:153.3px;top:1782.8px;height:40px;line-height:40px;font-size:28px;color:#222;font-weight:400;white-space:pre;letter-spacing:-0.95px;">200</div>
<div style="position:absolute;left:153.3px;top:1873.1px;height:40px;line-height:40px;font-size:28px;color:#222;font-weight:400;white-space:pre;letter-spacing:-0.95px;">100</div>
<div style="position:absolute;left:98.80000000000001px;top:1999px;height:40px;line-height:40px;font-size:27px;color:#222;font-weight:400;white-space:pre;width:300px;text-align:center;">Wed 6:00 PM</div>
<div style="position:absolute;left:359px;top:1999px;height:40px;line-height:40px;font-size:27px;color:#222;font-weight:400;white-space:pre;width:300px;text-align:center;">Thu 9:46 PM</div>
<div style="position:absolute;left:619px;top:1999px;height:40px;line-height:40px;font-size:27px;color:#222;font-weight:400;white-space:pre;width:300px;text-align:center;">Sat 1:33 AM</div>
<div style="position:absolute;left:878.5px;top:1999px;height:40px;line-height:40px;font-size:27px;color:#222;font-weight:400;white-space:pre;width:300px;text-align:center;">Sun 5:20 AM</div>
<div style="position:absolute;left:1138.5px;top:1999px;height:40px;line-height:40px;font-size:27px;color:#222;font-weight:400;white-space:pre;width:300px;text-align:center;">Mon 9:06 AM</div>
<div style="position:absolute;left:1397px;top:1999px;height:40px;line-height:40px;font-size:27px;color:#222;font-weight:400;white-space:pre;width:300px;text-align:center;">Tue 12:53 PM</div>
<div style="position:absolute;left:132px;top:2069px;width:24px;height:24px;background:#3f6a9c;"></div>
<div style="position:absolute;left:164px;top:2061px;height:40px;line-height:40px;font-size:27.5px;color:#444;font-weight:400;white-space:pre;">A/C Power</div>
<div style="position:absolute;left:1821px;top:179px;width:1881px;height:1934px;background:#fff;border:2px solid #b9b9b9;border-top:2px solid #aab3bf;border-right:1px solid #e4e4e4;border-radius:6px 8px 0 0;"></div>
<div style="position:absolute;left:1823px;top:181px;width:1878px;height:63px;background:#fafafa;border-radius:6px 8px 0 0;"></div>
<div style="position:absolute;left:2156px;top:243px;width:1546px;height:2px;background:#b9b9b9;"></div>
<div style="position:absolute;left:1821px;top:179px;width:337px;height:66px;background:#fafafa;border:2px solid #b9b9b9;border-top:2px solid #aab3bf;border-bottom:none;border-radius:6px 4px 0 0;"></div>
<svg style="position:absolute;left:1828.0px;top:199.5px;" width="30" height="30" viewBox="0 0 16 16"><path d="M1.6 .8 V14.4 H15.6" fill="none" stroke="#555" stroke-width=".9"/><path d="M.6 2 L1.6 .6 L2.6 2 M14.4 13.6 L15.8 14.4 L14.4 15.2" fill="none" stroke="#555" stroke-width=".7"/><path d="M2.6 12.4 L6.4 7.4 L8.4 9.6 L13.2 4" fill="none" stroke="#4c78a8" stroke-width="1"/></svg>
<div style="position:absolute;left:1868px;top:193.5px;height:40px;line-height:40px;font-size:27.5px;color:#111;font-weight:400;white-space:pre;">envmon: Line Chart</div>
<svg style="position:absolute;left:2122px;top:203px;" width="22" height="22" viewBox="0 0 22 22"><path d="M2 2 L20 20 M20 2 L2 20" stroke="#1c1c1c" stroke-width="2.2" fill="none"/></svg>
<svg style="position:absolute;left:3166.0px;top:197.0px;" width="28" height="28" viewBox="0 0 16 16"><circle cx="6.4" cy="6.4" r="5" fill="#fdfdf6" stroke="#a89048" stroke-width="1.1"/><path d="M10.2 10.2 L14.6 14.4" stroke="#8a6a50" stroke-width="1.8" stroke-linecap="round"/><path d="M10 10 L12 12" stroke="#b0a890" stroke-width="1.6"/><path d="M3.8 6.4 H9" stroke="#2838b0" stroke-width="1.6"/><path d="M6.4 3.8 V9" stroke="#2838b0" stroke-width="1.6"/></svg>
<svg style="position:absolute;left:3220.0px;top:197.0px;" width="28" height="28" viewBox="0 0 16 16"><circle cx="6.4" cy="6.4" r="5" fill="#fdfdf6" stroke="#a89048" stroke-width="1.1"/><path d="M10.2 10.2 L14.6 14.4" stroke="#8a6a50" stroke-width="1.8" stroke-linecap="round"/><path d="M10 10 L12 12" stroke="#b0a890" stroke-width="1.6"/><path d="M3.8 6.4 H9" stroke="#2838b0" stroke-width="1.6"/></svg>
<div style="position:absolute;left:3274px;top:184px;width:2px;height:54px;background:#dedede;"></div>
<svg style="position:absolute;left:3301.0px;top:195.0px;" width="32" height="32" viewBox="0 0 16 16"><rect x="1" y="1.2" width="14.4" height="14.2" rx="1" fill="#b8cce8" stroke="#6888c0" stroke-width=".9"/><rect x="4.17" y="1.7" width="8.06" height="6.25" fill="#eef0f0" stroke="#a8b0b8" stroke-width=".5"/><path d="M5.32 3.61 H11.08 M5.32 5.46 H11.08" stroke="#c4c8cc" stroke-width=".7"/><rect x="4.74" y="10.00" width="7.20" height="5.00" fill="#dce6f6" stroke="#5070b0" stroke-width=".8"/><rect x="8.78" y="11.14" width="2.02" height="3.41" fill="#5070b0"/></svg>
<svg style="position:absolute;left:3354.0px;top:195.0px;" width="32" height="32" viewBox="0 0 16 16"><rect x="0.8" y="1" width="11.6" height="11.4" rx="1" fill="#b8cce8" stroke="#6888c0" stroke-width=".9"/><rect x="3.35" y="1.5" width="6.50" height="5.02" fill="#eef0f0" stroke="#a8b0b8" stroke-width=".5"/><path d="M4.28 2.94 H8.92 M4.28 4.42 H8.92" stroke="#c4c8cc" stroke-width=".7"/><rect x="3.82" y="8.07" width="5.80" height="3.93" fill="#dce6f6" stroke="#5070b0" stroke-width=".8"/><rect x="7.06" y="8.98" width="1.62" height="2.74" fill="#5070b0"/><path d="M8.2 14.6 H10 M10.8 14.6 H12.6 M13.4 14.6 H15.2" stroke="#3858b0" stroke-width="1.6"/></svg>
<svg style="position:absolute;left:3408.0px;top:195.0px;" width="32" height="32" viewBox="0 0 16 16"><rect x="1.2" y="1.2" width="13.6" height="13.2" fill="#e8e8e4" stroke="#a89858" stroke-width="1"/><rect x="2.4" y="2.4" width="11.2" height="10.8" fill="#5c98d8"/><path d="M2.4 13.2 V8 L5 5 L8 9 L10 7.4 L13.6 11 V13.2 Z" fill="#d8dce4"/><path d="M4.6 4 L7.6 8.6 L6.4 12.6 L8.6 11 L9.4 13 L10 9 L7.4 4.4 Z" fill="#c83028"/><path d="M8 5 L10.6 9 L12 12.8 L9.6 12.8 Z" fill="#f0f0f0"/></svg>
<svg style="position:absolute;left:3462.0px;top:195.0px;" width="32" height="32" viewBox="0 0 16 16"><path d="M1.2 1.2 H7.4 L9.6 3.4000000000000004 V12.2 H1.2 Z" fill="#fff" stroke="#888" stroke-width=".9"/><path d="M2.8 4.8 H8.0" stroke="#188878" stroke-width="1.1"/><path d="M2.8 6.6000000000000005 H8.0" stroke="#188878" stroke-width="1.1"/><path d="M2.8 8.4 H8.0" stroke="#188878" stroke-width="1.1"/><path d="M2.8 10.2 H8.0" stroke="#188878" stroke-width="1.1"/><path d="M6.4 3.8 H12.600000000000001 L14.8 6.0 V14.8 H6.4 Z" fill="#fff" stroke="#888" stroke-width=".9"/><path d="M8.0 7.4 H13.2" stroke="#188878" stroke-width="1.1"/><path d="M8.0 9.2 H13.2" stroke="#188878" stroke-width="1.1"/><path d="M8.0 11.0 H13.2" stroke="#188878" stroke-width="1.1"/><path d="M8.0 12.8 H13.2" stroke="#188878" stroke-width="1.1"/></svg>
<svg style="position:absolute;left:3540.5px;top:195.5px;" width="31" height="31" viewBox="0 0 16 16"><defs><linearGradient id="gs" x1="0" y1="0" x2="0" y2="1"><stop offset="0" stop-color="#fff2b4"/><stop offset="1" stop-color="#f8c448"/></linearGradient></defs><path d="M6.1 4.7 L10.1 .7 L10.3 2.8 C11.5 2.7 13.2 3 14.3 4.9 C14.9 6 14.9 7.4 13.8 8.9 C13.8 7.6 13.2 6.2 12.4 5.9 C11.8 5.7 11 5.7 10.4 5.8 L10.1 8.5 Z" fill="url(#gs)" stroke="#c8921c" stroke-width="0.9" stroke-linejoin="round"/><path d="M6.1 4.7 L10.1 .7 L10.3 2.8 C11.5 2.7 13.2 3 14.3 4.9 C14.9 6 14.9 7.4 13.8 8.9 C13.8 7.6 13.2 6.2 12.4 5.9 C11.8 5.7 11 5.7 10.4 5.8 L10.1 8.5 Z" transform="rotate(180 8 8.2)" fill="url(#gs)" stroke="#c8921c" stroke-width="0.9" stroke-linejoin="round"/></svg>
<svg style="position:absolute;left:3593.0px;top:195.0px;" width="32" height="32" viewBox="0 0 16 16"><path d="M8.4 3 H1.8 V14.4 H13 V8" fill="none" stroke="#222" stroke-width="1.15"/><path d="M6.8 9.4 L14.6 1.6 M9.2 1.4 H14.8 V7" fill="none" stroke="#222" stroke-width="1.15"/><path d="M2.4 15 H13.6 V8.6" fill="none" stroke="#999" stroke-width=".7"/></svg>
<svg style="position:absolute;left:3648.0px;top:195.0px;" width="32" height="32" viewBox="0 0 16 16"><circle cx="8" cy="3.15" r="1.95" fill="none" stroke="#222" stroke-width=".95"/><circle cx="8" cy="8" r="1.95" fill="none" stroke="#222" stroke-width=".95"/><circle cx="8" cy="12.85" r="1.95" fill="none" stroke="#222" stroke-width=".95"/></svg>
<svg style="position:absolute;left:1823px;top:245px" width="1877" height="1755" viewBox="1823 245 1877 1755"><path d="M1910 1867.6 H3680" stroke="#e5e5e5" stroke-width="1.6" stroke-dasharray="6 6" fill="none"/><path d="M1910 1753.47 H3680" stroke="#e5e5e5" stroke-width="1.6" stroke-dasharray="6 6" fill="none"/><path d="M1910 1639.33 H3680" stroke="#e5e5e5" stroke-width="1.6" stroke-dasharray="6 6" fill="none"/><path d="M1910 1525.2 H3680" stroke="#e5e5e5" stroke-width="1.6" stroke-dasharray="6 6" fill="none"/><path d="M1910 1411.06 H3680" stroke="#e5e5e5" stroke-width="1.6" stroke-dasharray="6 6" fill="none"/><path d="M1910 1296.92 H3680" stroke="#e5e5e5" stroke-width="1.6" stroke-dasharray="6 6" fill="none"/><path d="M1910 1182.79 H3680" stroke="#e5e5e5" stroke-width="1.6" stroke-dasharray="6 6" fill="none"/><path d="M1910 1068.65 H3680" stroke="#e5e5e5" stroke-width="1.6" stroke-dasharray="6 6" fill="none"/><path d="M1910 954.516 H3680" stroke="#e5e5e5" stroke-width="1.6" stroke-dasharray="6 6" fill="none"/><path d="M1910 840.38 H3680" stroke="#e5e5e5" stroke-width="1.6" stroke-dasharray="6 6" fill="none"/><path d="M1910 726.244 H3680" stroke="#e5e5e5" stroke-width="1.6" stroke-dasharray="6 6" fill="none"/><path d="M1910 612.108 H3680" stroke="#e5e5e5" stroke-width="1.6" stroke-dasharray="6 6" fill="none"/><path d="M1910 497.972 H3680" stroke="#e5e5e5" stroke-width="1.6" stroke-dasharray="6 6" fill="none"/><path d="M1910 383.836 H3680" stroke="#e5e5e5" stroke-width="1.6" stroke-dasharray="6 6" fill="none"/><path d="M1943 272 V1981" stroke="#e5e5e5" stroke-width="1.6" stroke-dasharray="6 6" fill="none"/><path d="M1943 1984 V1993.5" stroke="#111" stroke-width="2" fill="none"/><path d="M2089.55 272 V1981" stroke="#e5e5e5" stroke-width="1.6" stroke-dasharray="6 6" fill="none"/><path d="M2089.55 1984 V1993.5" stroke="#111" stroke-width="2" fill="none"/><path d="M2236.1 272 V1981" stroke="#e5e5e5" stroke-width="1.6" stroke-dasharray="6 6" fill="none"/><path d="M2236.1 1984 V1993.5" stroke="#111" stroke-width="2" fill="none"/><path d="M2382.65 272 V1981" stroke="#e5e5e5" stroke-width="1.6" stroke-dasharray="6 6" fill="none"/><path d="M2382.65 1984 V1993.5" stroke="#111" stroke-width="2" fill="none"/><path d="M2529.2 272 V1981" stroke="#e5e5e5" stroke-width="1.6" stroke-dasharray="6 6" fill="none"/><path d="M2529.2 1984 V1993.5" stroke="#111" stroke-width="2" fill="none"/><path d="M2675.75 272 V1981" stroke="#e5e5e5" stroke-width="1.6" stroke-dasharray="6 6" fill="none"/><path d="M2675.75 1984 V1993.5" stroke="#111" stroke-width="2" fill="none"/><path d="M2822.3 272 V1981" stroke="#e5e5e5" stroke-width="1.6" stroke-dasharray="6 6" fill="none"/><path d="M2822.3 1984 V1993.5" stroke="#111" stroke-width="2" fill="none"/><path d="M2968.85 272 V1981" stroke="#e5e5e5" stroke-width="1.6" stroke-dasharray="6 6" fill="none"/><path d="M2968.85 1984 V1993.5" stroke="#111" stroke-width="2" fill="none"/><path d="M3115.4 272 V1981" stroke="#e5e5e5" stroke-width="1.6" stroke-dasharray="6 6" fill="none"/><path d="M3115.4 1984 V1993.5" stroke="#111" stroke-width="2" fill="none"/><path d="M3261.95 272 V1981" stroke="#e5e5e5" stroke-width="1.6" stroke-dasharray="6 6" fill="none"/><path d="M3261.95 1984 V1993.5" stroke="#111" stroke-width="2" fill="none"/><path d="M3408.5 272 V1981" stroke="#e5e5e5" stroke-width="1.6" stroke-dasharray="6 6" fill="none"/><path d="M3408.5 1984 V1993.5" stroke="#111" stroke-width="2" fill="none"/><path d="M3555.05 272 V1981" stroke="#e5e5e5" stroke-width="1.6" stroke-dasharray="6 6" fill="none"/><path d="M3555.05 1984 V1993.5" stroke="#111" stroke-width="2" fill="none"/><path d="M1907 270 V1982.4" stroke="#111" stroke-width="2" fill="none"/><path d="M1908.5 1983.5 H3680" stroke="#111" stroke-width="2" fill="none"/><path d="M1895 1981.74 H1905" stroke="#111" stroke-width="2" fill="none"/><path d="M1895 1867.6 H1905" stroke="#111" stroke-width="2" fill="none"/><path d="M1895 1753.47 H1905" stroke="#111" stroke-width="2" fill="none"/><path d="M1895 1639.33 H1905" stroke="#111" stroke-width="2" fill="none"/><path d="M1895 1525.2 H1905" stroke="#111" stroke-width="2" fill="none"/><path d="M1895 1411.06 H1905" stroke="#111" stroke-width="2" fill="none"/><path d="M1895 1296.92 H1905" stroke="#111" stroke-width="2" fill="none"/><path d="M1895 1182.79 H1905" stroke="#111" stroke-width="2" fill="none"/><path d="M1895 1068.65 H1905" stroke="#111" stroke-width="2" fill="none"/><path d="M1895 954.516 H1905" stroke="#111" stroke-width="2" fill="none"/><path d="M1895 840.38 H1905" stroke="#111" stroke-width="2" fill="none"/><path d="M1895 726.244 H1905" stroke="#111" stroke-width="2" fill="none"/><path d="M1895 612.108 H1905" stroke="#111" stroke-width="2" fill="none"/><path d="M1895 497.972 H1905" stroke="#111" stroke-width="2" fill="none"/><path d="M1895 383.836 H1905" stroke="#111" stroke-width="2" fill="none"/><path d="M1908.4 851.8 L1910.4 851.8 L1912.4 857.5 L1913.2 857.5 L1914.4 851.8 L1916.4 857.5 L1918.4 857.5 L1920.4 851.8 L1922.4 857.5 L1934.4 857.5 L1936.3 863.2 L1958.4 863.2 L1959.3 868.9 L1972.4 868.9 L1974.4 863.2 L1976.4 868.9 L1986.4 868.9 L1987.9 874.6 L1996.4 874.6 L1997.8 880.3 L2000.4 868.9 L2001.1 863.2 L2006.4 863.2 L2007.7 857.5 L2010.4 857.5 L2012.4 851.8 L2022.4 851.8 L2024.4 846.1 L2026.4 846.1 L2028.4 840.4 L2030.8 840.4 L2032.4 846.1 L2034.1 851.8 L2036.4 846.1 L2046.4 846.1 L2048.4 840.4 L2052.4 840.4 L2053.8 846.1 L2062.4 846.1 L2064.4 840.4 L2066.4 840.4 L2067 834.7 L2068.4 840.4 L2075.8 840.4 L2078.4 846.1 L2080.4 851.8 L2081.3 851.8 L2082.4 846.1 L2084.4 851.8 L2086.4 846.1 L2088.4 851.8 L2091.2 851.8 L2092.4 846.1 L2094.5 846.1 L2096.4 851.8 L2098.4 863.2 L2100 863.2 L2102.4 868.9 L2106.4 868.9 L2108.4 863.2 L2110.4 868.9 L2112.4 863.2 L2114.4 868.9 L2118.4 868.9 L2120.4 874.6 L2122 874.6 L2124.4 880.3 L2146.4 880.3 L2148.4 886 L2150.4 886 L2152.4 880.3 L2156.4 880.3 L2158.4 886 L2159.3 886 L2160.4 880.3 L2162.4 880.3 L2163.7 874.6 L2166.4 880.3 L2168.4 880.3 L2170.3 886 L2178.4 886 L2180.4 880.3 L2184.4 880.3 L2184.6 886 L2212.4 886 L2214.4 891.7 L2215.4 886 L2218.4 886 L2220.4 891.7 L2222.4 891.7 L2224.4 886 L2226.4 891.7 L2228.4 886 L2234.1 886 L2236.4 880.3 L2238.4 886 L2244 886 L2246.4 880.3 L2248.4 880.3 L2250.4 886 L2262.6 886 L2264.4 880.3 L2265.9 880.3 L2268.4 886 L2284.4 886 L2286.4 891.7 L2286.8 886 L2292.4 886 L2294.4 891.7 L2295.6 886 L2298.2 887.7 L2299.6 874.6 L2301.1 868.9 L2302.4 868.9 L2304.4 863.2 L2306.4 868.9 L2308.4 863.2 L2308.8 868.9 L2310.4 868.9 L2312.4 863.2 L2320.4 863.2 L2320.9 857.5 L2322.4 863.2 L2324.4 857.5 L2330.4 857.5 L2332.4 863.2 L2333 863.2 L2334.4 857.5 L2350.4 857.5 L2351.6 863.2 L2363.7 863.2 L2366.4 868.9 L2368.4 863.2 L2372.5 863.2 L2374.4 868.9 L2378.4 868.9 L2379.1 863.2 L2380.4 868.9 L2392.4 868.9 L2394.4 863.2 L2400.4 863.2 L2402.4 868.9 L2406.4 868.9 L2408.4 863.2 L2410.4 868.9 L2418.4 868.9 L2418.7 863.2 L2424.4 863.2 L2426.4 868.9 L2428.4 863.2 L2430.4 868.9 L2436.4 868.9 L2438.4 863.2 L2442.4 863.2 L2444.4 868.9 L2446.4 863.2 L2448.4 863.2 L2450.4 868.9 L2451.6 863.2 L2454.4 868.9 L2456.4 863.2 L2472.4 863.2 L2474.4 868.9 L2475.8 868.9 L2478.4 863.2 L2480.4 868.9 L2482.4 863.2 L2498.9 863.2 L2500.4 868.9 L2502.4 863.2 L2508.4 863.2 L2509.9 857.5 L2512.4 863.2 L2516.4 863.2 L2518.4 857.5 L2518.7 863.2 L2520.4 857.5 L2522 851.8 L2532.4 851.8 L2534.1 857.5 L2542.4 857.5 L2544 863.2 L2546.4 857.5 L2556 857.5 L2558.4 851.8 L2564.4 851.8 L2566.4 857.5 L2573.6 857.5 L2576.4 863.2 L2582.4 863.2 L2584.4 857.5 L2590.4 857.5 L2592.3 863.2 L2594.4 857.5 L2596.4 857.5 L2596.7 851.8 L2598.4 857.5 L2600.4 851.8 L2608.4 851.8 L2610.4 846.1 L2612.4 851.8 L2613.2 851.8 L2614.4 857.5 L2616.4 863.2 L2616.5 857.5 L2622.4 857.5 L2623.1 863.2 L2624.4 857.5 L2626.4 851.8 L2627.5 857.5 L2628.4 851.8 L2630.4 857.5 L2631.9 857.5 L2634.1 863.2 L2640.4 863.2 L2640.7 857.5 L2647.3 857.5 L2648.4 863.2 L2650.4 863.2 L2651.6 868.9 L2654.4 868.9 L2656.4 863.2 L2662.4 863.2 L2662.6 868.9 L2664.4 863.2 L2666.4 863.2 L2668.4 868.9 L2669.2 863.2 L2673.6 863.2 L2676.4 868.9 L2678 868.9 L2680.4 874.6 L2689 874.6 L2690.4 880.3 L2722 880.3 L2724.4 886 L2734.4 886 L2736.4 891.7 L2737.4 891.7 L2738.4 886 L2740.4 891.7 L2756.4 891.7 L2758.4 886 L2760.4 891.7 L2767 891.7 L2768.4 880.3 L2770.4 880.3 L2772.4 874.6 L2773.6 874.6 L2776.4 868.9 L2784.4 868.9 L2786.4 863.2 L2788.4 863.2 L2790.4 868.9 L2798.4 868.9 L2800.4 863.2 L2802.4 863.2 L2804.4 868.9 L2806.4 863.2 L2808.4 868.9 L2816.4 868.9 L2818.4 863.2 L2820.4 868.9 L2831.9 868.9 L2834.4 863.2 L2836.4 868.9 L2838.4 863.2 L2840.4 868.9 L2844.4 868.9 L2846.4 863.2 L2847.3 868.9 L2848.4 863.2 L2862.4 863.2 L2864.4 868.9 L2864.8 863.2 L2866.4 868.9 L2868.4 863.2 L2870.4 863.2 L2872.4 868.9 L2874.4 863.2 L2875.8 863.2 L2878.4 868.9 L2884.4 868.9 L2886.4 874.6 L2886.8 874.6 L2888.4 868.9 L2894.4 868.9 L2896.4 874.6 L2897.8 874.6 L2900.4 880.3 L2906.4 880.3 L2908.4 874.6 L2910.4 880.3 L2917.6 880.3 L2920.4 886 L2940.4 886 L2940.7 891.7 L2942.4 886 L2948.4 886 L2950.4 891.7 L2952.4 891.7 L2954.4 886 L2956.4 891.7 L2964.4 891.7 L2965.9 886 L2968.1 891.7 L2988.4 891.7 L2990.1 897.4 L3009.9 897.4 L3012.4 886 L3013.2 880.3 L3020.4 880.3 L3022.4 874.6 L3023.1 880.3 L3024.4 886 L3026.4 886 L3028.4 880.3 L3028.6 874.6 L3034.1 874.6 L3036.4 868.9 L3050.4 868.9 L3052.4 863.2 L3053.8 868.9 L3058.4 868.9 L3060.4 863.2 L3062.4 868.9 L3064.4 868.9 L3066.4 863.2 L3070.4 863.2 L3072.4 868.9 L3092.4 868.9 L3094.4 863.2 L3104.4 863.2 L3106.4 868.9 L3106.6 863.2 L3112.4 863.2 L3114.4 868.9 L3116.4 863.2 L3116.5 863.2 L3118.4 868.9 L3119.8 880.3 L3130.4 880.3 L3132.4 886 L3134.1 891.7 L3136.4 886 L3138.4 880.3 L3140.4 880.3 L3142.4 886 L3144 880.3 L3146.4 886 L3151.6 886 L3153.8 891.7 L3172.4 891.7 L3174.4 886 L3176.4 891.7 L3205.5 891.7 L3206.4 886 L3208.8 886 L3210.4 891.7 L3212.1 886 L3217.6 886 L3220.4 891.7 L3224.4 891.7 L3226.4 886 L3228.4 891.7 L3242.4 891.7 L3244.4 886 L3246.4 891.7 L3248.4 891.7 L3249.5 897.4 L3250.4 897.4 L3252.4 891.7 L3256.4 891.7 L3258.2 897.4 L3290.4 897.4 L3292.4 891.7 L3294.4 897.4 L3296.4 897.4 L3298.4 903.2 L3298.9 897.4 L3300.4 903.2 L3306.4 903.2 L3306.6 897.4 L3308.4 903.2 L3311 903.2 L3312.4 897.4 L3313.2 891.7 L3314.4 891.7 L3316.4 886 L3318.7 886 L3320.4 880.3 L3322 874.6 L3326.4 874.6 L3328.4 880.3 L3328.6 880.3 L3330.4 874.6 L3336.3 874.6 L3338.4 868.9 L3338.5 868.9 L3340.4 874.6 L3346.2 874.6 L3348.4 868.9 L3350.5 868.9 L3352.4 874.6 L3360.4 874.6 L3362.4 880.3 L3363.7 874.6 L3370.4 874.6 L3372.4 880.3 L3379.1 880.3 L3380.4 886 L3382.4 891.7 L3384.4 886 L3385.7 891.7 L3400 891.7 L3402.4 897.4 L3404.4 891.7 L3404.9 897.4 L3406.4 891.7 L3412.4 891.7 L3414.4 897.4 L3418.4 897.4 L3419.8 891.7 L3422.4 897.4 L3426.4 897.4 L3428.4 891.7 L3430.4 891.7 L3432.1 897.4 L3448.4 897.4 L3450.4 891.7 L3452.4 897.4 L3469.2 897.4 L3470.4 891.7 L3492.4 891.7 L3494 897.4 L3506.4 897.4 L3508 891.7 L3512.1 891.7 L3514.4 897.4 L3536.4 897.4 L3538.4 891.7 L3540.4 897.4 L3548.4 897.4 L3550.4 891.7 L3552.4 897.4 L3572.3 897.4 L3574.4 903.2 L3574.7 903.2 L3576.4 897.4 L3578.4 903.2 L3580.4 903.2 L3581.3 897.4 L3586.4 897.4 L3587.9 903.2 L3590.4 897.4 L3614.3 897.4 L3616.4 891.7 L3617.6 891.7 L3620.1 897.4 L3625.8 897.4 L3628.4 891.7 L3629.1 891.7 L3630.4 897.4 L3632.4 891.7 L3634.1 897.4 L3636.4 891.7 L3640.4 891.7 L3642.3 897.4 L3644.4 891.7 L3647.3 891.7 L3648.4 897.4 L3650.4 891.7 L3655.5 891.7 L3656.4 886 L3658.4 891.7 L3664.4 891.7 L3665.4 897.4 L3666.4 891.7 L3668.4 897.4 L3668.7 891.7 L3677.7 891.7" stroke="#3f6a9c" stroke-width="3.7" fill="none" stroke-linejoin="miter"/><path d="M1908.4 983 L1918.7 983 L1920.4 977.3 L1922.4 971.6 L1923.1 972.3 L1924.4 945.5 L1926.4 903.2 L1928.4 897.4 L1929.7 897.6 L1930.8 921.8 L1932.4 948.9 L1933 960.2 L1934.4 960.2 L1936.3 965.9 L1939.6 965.9 L1942.4 977.3 L1960.4 977.3 L1962.4 971.6 L1964.4 977.3 L1967 977.3 L1968.4 971.6 L1970.4 965.9 L1971.4 965.9 L1972.4 960.2 L1974.4 948.8 L1975.8 941.5 L1978 874.6 L1980.4 868.9 L1982.4 868.9 L1984.4 874.6 L1984.6 873.4 L1985.7 937.4 L1988.4 954.5 L1990.1 960.2 L1992.4 965.9 L1994.4 965.9 L1995.6 971.6 L1998.4 971.6 L2000.4 977.3 L2002.4 977.3 L2004.4 971.6 L2006.4 977.3 L2018.4 977.3 L2019.8 975.6 L2022.4 947 L2023.1 939.3 L2024.4 916 L2025.3 903.2 L2026.4 897.4 L2027.5 892.1 L2028.4 925.3 L2028.6 932.7 L2030.4 957.9 L2030.8 965.9 L2034.4 965.9 L2036.3 971.6 L2044.4 971.6 L2045.1 977.3 L2046.4 971.6 L2054.4 971.6 L2056.4 965.9 L2060.4 965.9 L2061.5 965.7 L2062.4 956.7 L2064.4 936.7 L2064.8 931.7 L2066.4 931.7 L2067 932.7 L2068.4 950.9 L2069.2 960.2 L2075.8 960.2 L2078.4 965.9 L2100.4 965.9 L2102.2 967.9 L2104.4 948.8 L2106.4 931.7 L2106.6 932.7 L2108.4 950.7 L2108.8 954.5 L2116.4 954.5 L2118.4 960.2 L2119.8 960.2 L2122.4 965.9 L2126.4 965.9 L2128.4 971.6 L2130.8 971.6 L2132.4 977.3 L2134.4 977.3 L2136.3 983 L2156 983 L2158.4 965.9 L2159.3 963.5 L2160.4 931.7 L2162.4 931.7 L2162.6 932.7 L2164.4 958.8 L2164.8 965.9 L2166.4 960.2 L2168.4 965.9 L2190.1 965.9 L2192.4 971.6 L2194.4 971.6 L2195.6 977.3 L2222 977.3 L2224.4 965.9 L2226.4 954.5 L2228.4 943.1 L2229.7 932.7 L2232.4 896.8 L2233 886 L2234.4 880.3 L2236.3 868.9 L2238.4 868.9 L2238.5 869 L2240.4 895.6 L2240.7 899.8 L2241.8 943.1 L2244.4 948.8 L2246.2 954.5 L2248.4 954.5 L2249.5 960.2 L2250.4 960.2 L2252.4 965.9 L2254.4 965.9 L2256 971.6 L2264.4 971.6 L2266.4 977.3 L2272.4 977.3 L2274.4 983 L2278.4 983 L2280.4 977.3 L2282.4 981.1 L2284.4 965.1 L2284.6 965.9 L2286.4 948.8 L2287.9 939.3 L2290.1 880.3 L2292.4 874.6 L2293.4 874.6 L2294.4 880.3 L2295.6 888.8 L2297.8 960.2 L2300 965.9 L2302.2 965.9 L2304.4 971.6 L2306.4 977.3 L2326.4 977.3 L2328.4 983 L2329.7 983 L2332.4 971.6 L2333 972.3 L2334.4 947.1 L2335.2 932.7 L2336.4 920.2 L2337.4 908.9 L2338.4 908.9 L2339.1 909.7 L2340 943.7 L2341.8 965.9 L2345.1 965.9 L2346.4 960.2 L2348.4 954.5 L2349.5 954.5 L2350.4 948.8 L2352.4 948.8 L2353.8 943.1 L2356 937.4 L2358.4 948.8 L2359.3 948.8 L2360.4 954.5 L2361.5 954.5 L2362.4 960.2 L2363.7 965.9 L2366.4 971.6 L2368.1 971.6 L2370.4 977.3 L2372.4 983 L2374.4 983 L2376.4 988.8 L2378.4 983 L2379.1 988.8 L2380.4 983 L2384.4 983 L2386.4 971.6 L2387.9 965.9 L2390.4 948.8 L2392.3 943.1 L2394.4 931.7 L2394.9 931.7 L2396.4 937.4 L2397.8 943.1 L2400.4 943.1 L2402.4 948.8 L2404.4 948.8 L2406.4 954.5 L2426.4 954.5 L2428.4 948.8 L2430.4 954.5 L2434.4 954.5 L2436.4 948.8 L2440.4 948.8 L2440.7 945.9 L2442.4 918.8 L2442.9 910.8 L2444.4 898.8 L2445.1 897.4 L2446.4 891.7 L2448.4 892.1 L2449.5 920.3 L2450.4 926 L2453.8 926 L2456.4 931.7 L2458.2 937.4 L2463.7 937.4 L2466.4 943.1 L2468.4 948.8 L2480.4 948.8 L2482.4 954.5 L2484.4 948.8 L2486.4 948.8 L2488.4 954.5 L2490.4 948.8 L2498.9 948.8 L2500.4 937.4 L2501.1 932.7 L2502.4 918.5 L2503.3 908.9 L2504.4 903.2 L2505.5 891.7 L2506.4 891.7 L2507.7 893.2 L2509.9 920.3 L2512.4 926 L2514.3 926 L2516.4 931.7 L2517.6 931.7 L2520.4 937.4 L2522 937.4 L2524.4 943.1 L2526.4 948.8 L2534.4 948.8 L2536.4 943.1 L2538.4 948.8 L2542.4 948.8 L2544.4 943.1 L2546.4 948.8 L2547.3 948.8 L2548.4 943.1 L2550.4 931.7 L2550.5 926 L2552.3 920.3 L2554.4 926 L2554.9 931.7 L2556.4 926 L2560.4 926 L2562.4 931.7 L2563.7 931.7 L2566.4 937.4 L2568.4 937.4 L2570.4 943.1 L2572.4 943.1 L2572.5 948.8 L2574.4 943.1 L2576.4 943.1 L2578.4 937.4 L2586.8 937.4 L2588.4 931.7 L2590.4 926 L2598.4 926 L2600.4 931.7 L2602.4 931.7 L2603.3 937.4 L2606.4 937.4 L2608.4 943.1 L2612.4 943.1 L2614.4 948.8 L2622.4 948.8 L2624.4 954.5 L2626.4 954.5 L2628.4 960.2 L2628.6 954.5 L2630.4 954.5 L2631.9 948.8 L2634.4 954.5 L2635.2 948.8 L2636.4 948.8 L2638.4 943.1 L2640.4 937.4 L2642.4 937.4 L2644.4 931.7 L2646.4 931.7 L2648.4 937.4 L2649.5 937.4 L2650.4 943.1 L2652.4 943.1 L2654.4 948.8 L2656.4 954.5 L2690.1 954.5 L2692.4 948.8 L2693.4 945.9 L2694.4 924.9 L2695.6 897.4 L2697.8 897.6 L2698.9 931.7 L2700 937.4 L2704.4 937.4 L2706.4 943.1 L2710.4 943.1 L2712.4 948.8 L2716.4 948.8 L2718.4 954.5 L2720.4 954.5 L2722.4 948.8 L2724.4 954.5 L2736.4 954.5 L2737.4 960.2 L2744.4 960.2 L2745.1 954.5 L2746.4 954.5 L2747.3 952.5 L2748.4 931.6 L2749.5 908.9 L2750.4 903.2 L2751.6 897.4 L2753.8 899.8 L2754.9 926 L2756.4 931.7 L2757.1 937.4 L2758.4 943.1 L2764.4 943.1 L2766.4 948.8 L2787.9 948.8 L2790.4 943.1 L2792.4 943.1 L2793.4 942.6 L2794.4 933.1 L2795.6 920.3 L2797.1 920.3 L2798.4 926 L2800 931.7 L2802.4 926 L2806.4 926 L2808.4 931.7 L2809.9 937.4 L2812.4 937.4 L2814.3 943.1 L2818.4 943.1 L2819.8 948.8 L2822.4 943.1 L2833 943.1 L2834.4 937.4 L2836.4 931.7 L2837.4 931.7 L2838.4 926 L2850.4 926 L2851.6 931.7 L2854.4 937.4 L2856.4 943.1 L2860.4 943.1 L2862.4 948.8 L2866.4 948.8 L2867 954.5 L2875.8 954.5 L2878 960.2 L2880.4 954.5 L2882.4 948.8 L2884.4 943.1 L2885.7 937.4 L2887.9 931.7 L2890.4 937.4 L2894.4 937.4 L2896.4 943.1 L2897.8 943.1 L2900.4 948.8 L2902.4 948.8 L2904.4 954.5 L2909.9 954.5 L2912.4 960.2 L2913.2 960.2 L2914.4 965.9 L2938.4 965.9 L2940.4 960.2 L2940.7 959.1 L2942.4 942.1 L2942.9 937.1 L2944.4 903.2 L2946.4 897.4 L2947.3 892.1 L2948.4 902.5 L2949.5 913 L2950.4 943.6 L2950.5 948.8 L2966.4 948.8 L2967 954.5 L2970.4 954.5 L2972.4 960.2 L2978.4 960.2 L2979.1 965.9 L2997.8 965.9 L3000 952.5 L3001.1 908.9 L3002.4 897.4 L3003.3 891.7 L3004.4 891.7 L3005.5 892.1 L3006.4 907.4 L3006.6 910.8 L3007.7 948.8 L3012.1 948.8 L3014.4 943.1 L3020.4 943.1 L3022.4 948.8 L3026.4 948.8 L3027.5 954.5 L3028.4 954.5 L3030.4 960.2 L3030.8 954.5 L3048.4 954.5 L3050.4 943.1 L3050.5 941.5 L3052.1 903.2 L3053.8 906.4 L3055.6 937.4 L3058.4 931.7 L3060.4 926 L3062.4 931.7 L3064.4 931.7 L3065.9 937.4 L3070.4 937.4 L3072.4 943.1 L3073.6 948.8 L3080.4 948.8 L3082.4 943.1 L3087.9 943.1 L3090.4 937.4 L3092.3 931.7 L3094.4 926 L3095.6 920.3 L3098.4 920.3 L3100 924 L3100.1 926 L3106.4 926 L3108.4 931.7 L3109.9 937.4 L3116.5 937.4 L3118.4 943.1 L3119.8 943.1 L3122.4 948.8 L3124.2 948.8 L3126.4 954.5 L3128.6 954.5 L3130.4 960.2 L3132.4 965.9 L3136.4 965.9 L3138.4 971.6 L3138.5 965.9 L3142.4 965.9 L3144 960.2 L3146.4 954.5 L3147.3 948.8 L3148.4 943.1 L3150.4 943.1 L3151.6 937.4 L3154.4 943.1 L3158.4 943.1 L3160.4 948.8 L3166.4 948.8 L3168.1 943.1 L3170.4 948.8 L3172.4 954.5 L3172.5 954.5 L3174.4 960.2 L3176.4 960.2 L3176.9 965.9 L3184.6 965.9 L3186.4 971.6 L3186.8 971.6 L3188.4 965.9 L3203.3 965.9 L3204.4 960.2 L3206.4 954.5 L3206.6 952.5 L3208.4 927.4 L3208.8 921.8 L3210.4 892.2 L3211 880.3 L3212.4 880.3 L3213.2 880 L3214.3 910.8 L3215.4 931.7 L3216.4 937.4 L3219.8 937.4 L3222.4 943.1 L3228.4 943.1 L3230.4 948.8 L3231.9 943.1 L3234.4 954.5 L3266.4 954.5 L3268.1 953.2 L3270.3 932.7 L3271.9 891 L3273.6 874.6 L3275.8 873.4 L3277.6 899.8 L3278.5 937.4 L3284.4 937.4 L3286.4 943.1 L3289 943.1 L3290.4 948.8 L3292.4 943.1 L3294.4 948.8 L3300.4 948.8 L3301.1 954.5 L3306.4 954.5 L3306.6 960.2 L3308.4 960.2 L3310.4 954.5 L3316.4 954.5 L3318.4 948.8 L3319.8 950.3 L3322 932.7 L3323.7 908.9 L3326.4 904.2 L3328.4 921.2 L3328.6 920.3 L3332.4 920.3 L3333 926 L3334.4 926 L3336.4 931.7 L3339.6 931.7 L3342.4 937.4 L3344.4 937.4 L3345.1 943.1 L3348.4 943.1 L3350.4 948.8 L3351.6 948.8 L3354.4 943.1 L3356.4 948.8 L3358.4 948.8 L3360.4 943.1 L3362.4 948.8 L3364.4 943.1 L3366.4 948.8 L3375.8 948.8 L3378.4 931.7 L3378.7 930.5 L3380.2 903.2 L3382.4 903.1 L3384 926 L3386.4 931.7 L3390.4 931.7 L3392.4 937.4 L3394.4 937.4 L3396.4 943.1 L3398.4 948.8 L3404.9 948.8 L3406.4 954.5 L3410.4 954.5 L3412.4 960.2 L3414.4 960.2 L3416.4 965.9 L3438.4 965.9 L3440.4 960.2 L3441.2 960.2 L3442.4 954.5 L3445.3 954.5 L3446.4 943.1 L3447.8 938.2 L3448.6 898.7 L3450.3 880.3 L3452.4 880.5 L3453.6 903.6 L3454.4 937.4 L3456.4 943.1 L3458.4 943.1 L3460.4 948.8 L3462.4 948.8 L3464.4 954.5 L3465.9 954.5 L3468.4 948.8 L3470.4 948.8 L3470.9 954.5 L3472.4 948.8 L3474.4 948.8 L3475 954.5 L3480.4 954.5 L3482.4 948.8 L3484.4 954.5 L3498.1 954.5 L3500.4 948.8 L3503 948.8 L3504.4 954.5 L3513.7 954.5 L3516.4 943.1 L3517 943.2 L3518.4 911.9 L3519.5 872.3 L3520.4 862.7 L3521.2 851.8 L3522.4 851.8 L3523.6 852.5 L3524.9 872.3 L3525.6 931.7 L3528.4 937.4 L3530.4 937.4 L3531.9 943.1 L3536.4 943.1 L3536.8 948.8 L3538.4 943.1 L3540.1 948.8 L3545.9 948.8 L3548.4 954.5 L3554.4 954.5 L3556.4 948.8 L3558.4 954.5 L3564.4 954.5 L3565.7 960.2 L3568.1 954.5 L3573.9 954.5 L3576.4 936.6 L3577.7 908.9 L3579.7 907.7 L3581.3 931.7 L3582.4 926 L3587.9 926 L3590.4 931.7 L3592 937.4 L3596.4 937.4 L3598.4 943.1 L3604.4 943.1 L3606.4 948.8 L3616.4 948.8 L3618.4 954.5 L3632.4 954.5 L3634.4 948.8 L3636.4 954.5 L3637.4 954.5 L3638.4 943.1 L3639 941.5 L3640.4 928.8 L3641 920.3 L3646.4 920.3 L3648.4 926 L3649.7 926 L3652.2 931.7 L3654.4 937.4 L3656.4 937.4 L3658.4 943.1 L3659.6 948.8 L3668.4 948.8 L3670.4 954.5 L3677.7 954.5" stroke="#9e3c3c" stroke-width="3.7" fill="none" stroke-linejoin="miter"/><path d="M1908.4 794.7 L1910.4 806.1 L1911 800.4 L1912.4 806.1 L1915.4 806.1 L1916.4 811.8 L1922.4 811.8 L1923.1 806.1 L1924.4 817.6 L1925.3 817.6 L1926.4 823.3 L1932.4 823.3 L1934.4 829 L1935.2 829 L1936.4 834.7 L1939.6 834.7 L1942.4 840.4 L1942.9 846.1 L1944.4 846.1 L1946.4 851.8 L1947.3 851.8 L1948.4 857.5 L1950.4 857.5 L1951.6 863.2 L1954.4 868.9 L1956 868.9 L1958.4 880.3 L1960.4 874.6 L1961.5 886 L1964.4 886 L1965.9 891.7 L1968.4 903.2 L1970.3 908.9 L1972.4 914.6 L1974.4 914.6 L1975.8 920.3 L1978.4 926 L1980.2 937.4 L1982.4 943.1 L1984.4 948.8 L1984.6 947 L1985.7 960.2 L1988.4 965.9 L1989 965.9 L1990.4 983 L1996.4 983 L1996.7 983.1 L1997.8 994.5 L2000.4 1011.6 L2001.1 1011.6 L2002.4 1000.2 L2003.3 994.1 L2004.4 1006.7 L2005.5 1017.3 L2006.4 1023 L2008.4 1028.7 L2008.8 1028.7 L2010.4 1017.3 L2012.4 1017.3 L2013.2 1012.7 L2014.3 1028.7 L2016.4 1040.1 L2018.4 1040.1 L2019.8 1045.8 L2022.4 1051.5 L2024.4 1051.5 L2025.3 1057.2 L2026.4 1051.5 L2028.4 1045.8 L2029.7 1040.1 L2032.4 1045.8 L2034.4 1034.4 L2036.3 1040.2 L2037.4 1062.9 L2038.4 1062.9 L2040.4 1068.7 L2044.4 1068.7 L2046.4 1074.4 L2048.4 1068.7 L2049.5 1068.7 L2050.4 1091.5 L2051.6 1102.9 L2054.4 1080.1 L2054.9 1091.5 L2056.4 1097.2 L2057.1 1102.9 L2058.4 1102.9 L2060.4 1120 L2062.4 1125.7 L2062.6 1125.7 L2064.4 1108.6 L2064.8 1108.6 L2066.4 1120 L2068.1 1125.7 L2070.4 1125.7 L2072.4 1137.1 L2075.8 1137.1 L2078.4 1120 L2079.1 1113.8 L2080.4 1100.9 L2081.3 1091.5 L2082.4 1091.5 L2084.4 1097.2 L2085.7 1091.9 L2086.8 1080.1 L2088.4 1080.1 L2090.1 1074.4 L2092.4 1057.2 L2093.4 1054.5 L2094.4 1034.5 L2094.5 1028.7 L2096.4 1023 L2097.8 1017.3 L2100 1004 L2101.1 983 L2102.4 977.3 L2104.4 971.6 L2106.4 965.9 L2106.6 960 L2107.7 931.7 L2110.4 926 L2111 924 L2112.4 911.4 L2113.2 904.2 L2114.3 855.8 L2115.4 763.5 L2116.4 747.5 L2117.6 726.2 L2119.8 709.1 L2122 703.4 L2124.2 714.8 L2126.4 743.4 L2128.4 766.2 L2128.6 754.8 L2130.4 749.1 L2131.9 743.4 L2134.1 749.1 L2136.4 754.8 L2137.4 760.5 L2138.4 771.9 L2140.4 777.6 L2140.7 766.2 L2142.4 754.8 L2144 720.5 L2146.4 754.8 L2147.3 783.3 L2148.4 766.2 L2150.4 732 L2151.6 720.5 L2154.4 766.2 L2156 777.6 L2158.4 760.5 L2160.4 749.1 L2162.4 709.1 L2162.6 726.2 L2164.4 743.4 L2166.4 760.5 L2168.4 766.2 L2169.2 789 L2170.4 766.2 L2172.4 766.2 L2173.6 754.8 L2176.4 714.8 L2176.9 703.4 L2178.4 703.4 L2180.2 714.8 L2181.3 771.9 L2182.4 783.3 L2184.4 789 L2185.7 783.3 L2188.4 783.3 L2189 766.2 L2190.4 789 L2192.3 777.6 L2194.4 766.2 L2196.4 771.9 L2198.4 771.9 L2200.4 783.3 L2202.2 783.3 L2204.4 766.2 L2205.5 754.8 L2206.4 771.9 L2207.7 789 L2210.4 794.7 L2212.4 800.4 L2214.4 800.4 L2216.4 806.1 L2217.6 800.4 L2220.4 789 L2220.9 771.9 L2222.4 800.4 L2224.2 794.7 L2226.4 811.8 L2228.4 800.4 L2228.6 811.8 L2230.4 806.1 L2231.9 811.8 L2234.1 777.6 L2236.4 766.2 L2238.4 766.2 L2240.4 777.6 L2240.7 777.6 L2242.4 783.3 L2244.4 789 L2246.2 794.7 L2248.4 794.7 L2250.4 800.4 L2251.6 806.1 L2254.4 817.6 L2256.4 817.6 L2257.1 823.3 L2258.4 834.7 L2260.4 846.1 L2262.4 851.8 L2264.4 851.8 L2264.8 857.5 L2266.4 863.2 L2268.4 868.9 L2269.2 874.6 L2270.4 886 L2272.4 891.7 L2273.6 897.4 L2276.4 920.3 L2278 926 L2280.4 937.4 L2282.4 943.1 L2284.4 954.5 L2285.7 960.2 L2288.4 965.9 L2290.4 971.6 L2291.2 971.6 L2292.4 983 L2294.4 983 L2295.6 988.8 L2298.4 994.5 L2300 996.5 L2300.1 994.5 L2302.4 1005.9 L2303.3 1011.6 L2304.4 1011.6 L2306.4 1017.3 L2307.7 1023 L2310.4 1028.7 L2311 1025.9 L2312.1 1017.3 L2314.3 1034.4 L2316.4 1034.4 L2316.5 1034.7 L2317.6 1011.6 L2319.8 1034.4 L2322 1051.5 L2324.2 1040.1 L2326.4 1057.2 L2328.4 1057.2 L2329.7 1051.5 L2331.9 1062.9 L2334.1 1068.7 L2336.3 1045.8 L2338.4 1034.4 L2340.4 1034.4 L2341.8 1028.7 L2344 1028.7 L2346.4 1023 L2348.4 1023 L2350.4 1011.6 L2350.5 1005.9 L2352.4 1000.2 L2353.8 1000.2 L2356.4 988.8 L2357.1 983 L2358.4 977.3 L2360.4 965.9 L2362.4 960.2 L2362.6 960 L2364.4 945.1 L2365.9 932.7 L2368.1 886.6 L2369.2 833.8 L2370.3 803.1 L2372.1 783.3 L2374.4 783.3 L2375.8 771.9 L2376.9 806.1 L2378.4 829 L2378.7 829 L2380.2 840.4 L2382.4 846.1 L2383.5 851.8 L2384.4 851.8 L2386.4 840.4 L2386.8 840.4 L2388.4 846.1 L2389 857.5 L2390.4 851.8 L2394.4 851.8 L2394.5 840.4 L2396.4 846.1 L2396.7 857.5 L2398.4 857.5 L2398.9 863.2 L2400.4 851.8 L2402.4 851.8 L2403.3 857.5 L2404.4 863.2 L2405.5 868.9 L2406.4 857.5 L2408.4 868.9 L2408.8 863.2 L2410.4 851.8 L2412.1 851.8 L2413.2 840.4 L2414.4 846.1 L2414.7 840.4 L2415.4 868.9 L2416.4 863.2 L2419.8 863.2 L2422.4 868.9 L2424.4 863.2 L2425.3 863.2 L2426.4 868.9 L2430.4 868.9 L2431.9 874.6 L2434.4 880.3 L2436.3 880.3 L2438.4 874.6 L2439.6 874.6 L2442.4 868.9 L2444 863.2 L2446.2 874.6 L2448.4 880.3 L2449.5 880.3 L2450.4 886 L2454.4 886 L2456.4 880.3 L2464.4 880.3 L2465.9 886 L2468.4 880.3 L2472.4 880.3 L2472.5 886 L2474.4 891.7 L2476.4 891.7 L2478 897.4 L2486.8 897.4 L2488.4 903.2 L2490.1 908.9 L2493.4 908.9 L2494.4 920.3 L2496.4 926 L2496.7 931.7 L2498.4 931.7 L2498.9 937.4 L2500.4 937.4 L2502.2 948.8 L2504.4 954.5 L2506.4 960.2 L2506.6 963.5 L2507.7 971.6 L2510.4 983 L2512.1 983 L2514.3 994.5 L2516.4 988.8 L2518.4 994.5 L2518.7 995.2 L2518.8 1011.6 L2519.8 1012.7 L2520.9 1023 L2522.4 1028.7 L2524.2 1040.1 L2526.4 1057.2 L2528.4 1062.9 L2529.7 1068.7 L2532.4 1080.1 L2533 1080.1 L2534.4 1091.5 L2535.2 1085.8 L2536.4 1097.2 L2538.4 1102.9 L2538.5 1097.2 L2540.4 1102.9 L2540.7 1097.2 L2541.8 1114.3 L2544 1131.4 L2546.4 1125.7 L2547.3 1120 L2548.4 1137.1 L2550.4 1137.1 L2551.6 1142.8 L2554.4 1165.7 L2554.9 1160 L2556 1142.8 L2557.6 1131.4 L2560.4 1137.1 L2561.5 1165.7 L2562.4 1177.1 L2562.6 1177.1 L2564.4 1194.2 L2564.8 1194.2 L2566.4 1199.9 L2567 1205.6 L2568.4 1188.5 L2569.2 1171.4 L2570.4 1182.8 L2571.4 1188.5 L2572.4 1188.5 L2573 1182.8 L2574.4 1199.9 L2574.7 1194.2 L2576.4 1205.6 L2577.4 1217 L2578.7 1217 L2580.2 1205.6 L2583.5 1205.6 L2584.4 1199.9 L2586.4 1188.5 L2587.9 1177.1 L2590.4 1165.7 L2592.3 1154.3 L2594.4 1142.8 L2595.6 1142.8 L2598.4 1131.4 L2600 1129.2 L2602.2 1108.6 L2604.4 1097.2 L2606.4 1091.5 L2607.7 1080.1 L2609.9 1067.7 L2612.1 1051.5 L2614.4 1040.1 L2615.4 1032.5 L2616.4 1023.5 L2617.6 1011.6 L2619.8 997.4 L2620.9 960 L2620.9 921.8 L2622 899.8 L2623.5 877.8 L2624.4 851.8 L2625.7 851.8 L2627.5 857.5 L2628.4 863.2 L2629 880.3 L2629.7 897.4 L2631.4 886 L2632.4 903.2 L2633.6 914.6 L2635.2 891.7 L2636.4 891.7 L2637.4 897.4 L2638.4 897.4 L2640.4 886 L2640.7 886 L2642.4 891.7 L2644 880.3 L2646.4 891.7 L2647.3 886 L2648.4 897.4 L2649.5 886 L2650.4 880.3 L2651.6 874.6 L2653.8 880.3 L2656.4 874.6 L2657.1 863.2 L2658.4 874.6 L2660.4 880.3 L2662.4 857.5 L2662.6 868.9 L2664.4 863.2 L2664.8 846.1 L2665.9 846.1 L2668.1 851.8 L2672.4 851.8 L2673.6 846.1 L2675.8 857.5 L2678 851.8 L2680.4 857.5 L2682.4 857.5 L2684.4 851.8 L2685.7 857.5 L2688.4 846.1 L2690.1 863.2 L2692.4 857.5 L2693.4 851.8 L2694.4 857.5 L2696.4 851.8 L2697.8 851.8 L2700 863.2 L2706.6 863.2 L2708.4 868.9 L2711 868.9 L2712.1 874.6 L2714.3 868.9 L2716.4 874.6 L2717.6 874.6 L2720.4 880.3 L2722 880.3 L2724.2 891.7 L2726.4 886 L2728.4 891.7 L2730.4 886 L2730.8 891.7 L2732.4 897.4 L2733 897.4 L2734.4 903.2 L2736.4 897.4 L2738.4 908.9 L2739.6 908.9 L2742.4 920.3 L2744.4 920.3 L2746.2 931.7 L2748.4 937.4 L2749.5 948.8 L2750.4 948.8 L2752.4 954.5 L2752.7 960.2 L2754.4 960.2 L2756 971.6 L2758.4 983 L2759.3 988.8 L2760.4 994.5 L2761.5 1005.9 L2762.4 1000.2 L2764.4 1011.6 L2764.8 1011.6 L2766.4 1017.3 L2768.1 1017.3 L2770.4 1028.7 L2771.4 1028.7 L2772.4 1034.4 L2774.4 1034.4 L2774.7 1034.7 L2775.8 1045.8 L2778.4 1051.5 L2779.1 1051.5 L2780.4 1057.2 L2782.4 1062.9 L2784.4 1074.4 L2784.6 1074.4 L2786.4 1080.1 L2787.9 1080.1 L2790.4 1091.5 L2791.2 1097.2 L2794.5 1097.2 L2796.4 1114.3 L2796.7 1108.6 L2798.4 1114.3 L2800 1114.3 L2802.2 1131.4 L2805.5 1131.4 L2806.4 1137.1 L2807.7 1142.8 L2810.4 1148.5 L2811 1146.8 L2812.1 1154.3 L2814.3 1171.4 L2816.4 1171.4 L2818.4 1177.1 L2820.4 1177.1 L2822 1182.8 L2825.3 1182.8 L2826.4 1194.2 L2830.4 1194.2 L2830.8 1199.9 L2832.4 1199.9 L2834.1 1188.5 L2836.4 1182.8 L2837.4 1182.8 L2838.4 1171.4 L2839.6 1165.7 L2842.4 1154.3 L2842.9 1154.3 L2844.4 1148.5 L2846.2 1142.8 L2848.4 1120 L2850.4 1114.3 L2851.6 1114.3 L2853.8 1097.2 L2856 1087.5 L2857.1 1068.7 L2858.4 1068.7 L2860.4 1057.2 L2862.4 1045.8 L2863.7 1034.4 L2866.4 1023 L2867 1017.3 L2868.4 1005.9 L2869.2 1001.8 L2870.4 991 L2871.4 982 L2872.4 962 L2872.5 960 L2872.6 932.7 L2873.6 899.8 L2875.4 855.8 L2876.4 841.8 L2877.6 825.1 L2879.1 794.7 L2880.4 800.4 L2881.3 794.7 L2882.4 811.8 L2882.9 806.1 L2884.4 834.7 L2884.6 834.7 L2886.4 846.1 L2886.8 857.5 L2888.4 857.5 L2889.5 863.2 L2890.4 857.5 L2892.3 863.2 L2894.4 846.1 L2894.5 846.1 L2896.4 851.8 L2896.7 857.5 L2898.4 857.5 L2900.4 851.8 L2901.1 851.8 L2902.4 840.4 L2903.3 840.4 L2904.4 829 L2905.5 829 L2906.4 823.3 L2908.4 823.3 L2910.4 829 L2912.1 823.3 L2914.3 811.8 L2916.4 806.1 L2916.5 806.1 L2918.4 789 L2918.7 783.3 L2920.4 789 L2920.9 783.3 L2922.4 789 L2924.2 794.7 L2926.4 800.4 L2927.5 806.1 L2928.4 800.4 L2930.4 811.8 L2930.8 811.8 L2932.4 817.6 L2933 823.3 L2934.4 834.7 L2936.3 823.3 L2938.4 829 L2938.5 834.7 L2940.4 829 L2944 829 L2946.2 840.4 L2947.3 851.8 L2948.4 846.1 L2950.4 840.4 L2952.7 840.4 L2954.4 846.1 L2956 851.8 L2958.4 851.8 L2959.3 857.5 L2960.4 863.2 L2964.4 863.2 L2965.9 868.9 L2968.4 874.6 L2970.4 868.9 L2972.4 868.9 L2974.4 874.6 L2976.4 874.6 L2978 880.3 L2980.2 891.7 L2982.4 897.4 L2984.4 897.4 L2986.4 903.2 L2987.9 908.9 L2990.4 914.6 L2991.2 914.6 L2992.4 926 L2994.4 926 L2995.6 928.4 L2996.7 948.8 L2998.4 948.8 L2998.9 954.5 L3000.4 960.2 L3002.2 963.5 L3003.3 983 L3004.4 988.8 L3005.5 994.5 L3006.4 1000.2 L3008.4 1005.9 L3008.8 1005.9 L3010.4 1011.6 L3012.1 1017.3 L3014.4 1023 L3016.4 1028.7 L3018.4 1028.7 L3020.4 1023 L3020.9 1025.9 L3022 1040.1 L3024.4 1045.8 L3026.4 1045.8 L3028.4 1040.1 L3029.7 1040.1 L3030.8 1051.5 L3032.4 1057.2 L3036.4 1057.2 L3038.4 1062.9 L3039.6 1062.9 L3041.8 1074.4 L3044.4 1085.8 L3045.1 1080.1 L3046.4 1091.5 L3050.5 1091.5 L3052.1 1080.9 L3053.4 1102.9 L3054.4 1102.9 L3056 1114.3 L3058.4 1120 L3059.3 1125.7 L3060.4 1125.7 L3062.4 1137.1 L3062.6 1131.4 L3064.4 1137.1 L3065.9 1148.5 L3068.4 1148.5 L3069.2 1154.3 L3073.6 1154.3 L3075.8 1160 L3078.4 1165.7 L3080.4 1165.7 L3082.4 1160 L3084.4 1154.3 L3084.6 1148.5 L3086.4 1154.3 L3088.4 1148.5 L3089 1142.8 L3090.4 1137.1 L3091.2 1137.1 L3092.4 1125.7 L3094.4 1120 L3094.5 1118.2 L3095.6 1108.6 L3098.4 1097.2 L3098.9 1096.3 L3100 1087.5 L3102.2 1065.5 L3104.4 1040.1 L3106.4 1028.7 L3107.7 1023 L3109.9 1004 L3112.1 983 L3114.4 977.3 L3115.4 965.9 L3116.4 971.6 L3117.6 960 L3120.4 927.6 L3120.9 926 L3122.4 908.9 L3123.1 910.8 L3124.4 882.2 L3124.6 877.8 L3126.4 822.9 L3128.4 772.9 L3128.6 767.9 L3130.4 749.9 L3130.8 745.9 L3132.4 732.4 L3133 726.2 L3135.2 726.2 L3136.4 737.7 L3137.4 737.1 L3138.4 747.5 L3139.1 754.7 L3140 777.6 L3142.4 783.3 L3142.9 777.6 L3144.4 783.3 L3150.4 783.3 L3151.6 771.9 L3153.8 771.9 L3156 766.2 L3157.6 760.5 L3159.3 754.8 L3161.5 754.8 L3162.4 749.1 L3163.7 760.5 L3165.5 771.9 L3166.4 760.5 L3167.7 743.4 L3169.9 754.8 L3172.1 732 L3174.3 714.8 L3176.4 743.4 L3176.5 737.7 L3178 737.7 L3180.2 749.1 L3184.6 749.1 L3186.4 754.8 L3186.8 749.1 L3188.4 754.8 L3189 754.8 L3190.4 771.9 L3191.2 771.9 L3192.4 777.6 L3194.4 783.3 L3195.6 783.3 L3198.4 789 L3198.9 783.3 L3200.4 777.6 L3201.1 783.3 L3202.4 789 L3203.3 789 L3204.4 794.7 L3206.4 794.7 L3207.7 789 L3210.4 794.7 L3212.4 794.7 L3214.3 806.1 L3216.4 800.4 L3218.4 811.8 L3218.7 811.8 L3220.4 800.4 L3222 806.1 L3224.4 811.8 L3225.3 811.8 L3226.4 817.6 L3227.5 823.3 L3231.9 823.3 L3234.4 834.7 L3240.4 834.7 L3240.7 840.4 L3242.4 840.4 L3242.9 846.1 L3244.4 846.1 L3246.4 851.8 L3247.3 851.8 L3248.4 857.5 L3250.4 868.9 L3250.5 868.9 L3252.4 880.3 L3253.8 882.2 L3254.9 891.7 L3256.4 897.4 L3258.2 908.9 L3260.4 914.6 L3261.5 920.3 L3262.4 920.3 L3263.7 931.7 L3265.9 937.4 L3268.4 943.1 L3270.3 943.1 L3272.4 948.8 L3273.6 943.1 L3276.4 948.8 L3276.9 954.5 L3278.4 954.5 L3279.1 965.9 L3280.2 965.9 L3282.4 971.6 L3284.4 977.3 L3285.7 977.3 L3288.4 971.6 L3289 965.9 L3290.4 971.6 L3294.4 971.6 L3295.6 977.3 L3298.4 988.8 L3302.2 988.8 L3304.4 1005.9 L3307.7 1005.9 L3310.4 1017.3 L3311 1017.3 L3312.4 1023 L3314.4 1023 L3315.4 1028.7 L3316.4 1034.4 L3317.6 1040.1 L3320.4 1051.5 L3320.9 1057.2 L3322.4 1057.2 L3323.1 1062.9 L3324.4 1062.9 L3326.4 1057.2 L3328.4 1068.7 L3328.6 1062.9 L3330.4 1074.4 L3331.9 1080.1 L3334.1 1068.7 L3336.4 1062.9 L3338.4 1068.7 L3338.5 1062.9 L3340.4 1057.2 L3341.8 1057.2 L3344 1034.4 L3346.4 1028.7 L3348.4 1023 L3350.4 1005.9 L3350.5 1011.6 L3352.4 1000.2 L3353.8 1000.2 L3356.4 994.5 L3358.2 988.8 L3360.4 965.9 L3362.4 965.9 L3362.6 960 L3363.7 943.1 L3366.4 931.7 L3367 931.7 L3368.4 926 L3370.3 917.4 L3372.4 900.6 L3372.5 899.8 L3374.4 880.8 L3374.7 877.8 L3376.4 848.7 L3376.5 847 L3378.4 824.3 L3378.7 820.7 L3380 789.9 L3380.9 745.9 L3382 717.4 L3383.1 693.2 L3383.4 671.5 L3384.4 705.6 L3384.8 719.3 L3385.4 667.5 L3386.2 645.6 L3387 663.5 L3388.4 669.2 L3388.8 646.3 L3390.4 674.9 L3390.8 674.9 L3392.4 686.3 L3392.8 686.3 L3394.4 680.6 L3395.8 686.3 L3397.8 709.1 L3399.8 703.4 L3401.8 709.1 L3403.8 703.4 L3405.7 714.8 L3407.7 726.2 L3409.3 680.6 L3410.4 703.4 L3410.7 714.8 L3412.4 703.4 L3413.7 720.5 L3415.7 692 L3418.4 703.4 L3418.7 720.5 L3420.4 692 L3422.1 692 L3423.7 680.6 L3425.3 657.8 L3426.4 674.9 L3427.7 663.5 L3429.3 709.1 L3430.4 692 L3431.6 703.4 L3433.6 669.2 L3435.2 697.7 L3436.4 703.4 L3437.6 692 L3439.6 692 L3442.4 709.1 L3442.6 709.1 L3444.4 714.8 L3448.4 714.8 L3448.6 720.5 L3450.4 714.8 L3450.6 709.1 L3452.4 726.2 L3452.6 720.5 L3454.4 732 L3455.6 726.2 L3458.4 732 L3459.5 732 L3460.4 737.7 L3462.5 737.7 L3464.4 743.4 L3464.5 749.1 L3470.4 749.1 L3472.4 754.8 L3476.5 754.8 L3478.4 760.5 L3478.5 766.2 L3482.4 766.2 L3484.4 771.9 L3486.4 771.9 L3487.4 777.6 L3488.4 777.6 L3489.8 789 L3491.5 806.1 L3492.4 800.4 L3494.4 811.8 L3494.8 806.1 L3496.4 817.6 L3497.3 817.6 L3498.4 823.3 L3500.5 823.3 L3502.4 834.7 L3503 834.7 L3504.4 840.4 L3506.3 846.1 L3508.4 846.1 L3509.6 857.5 L3511.3 863.2 L3512.4 868.9 L3514.4 874.6 L3516.4 874.6 L3517.9 880.3 L3520.4 891.7 L3521.2 891.7 L3522.4 897.4 L3524.4 908.9 L3525.3 908.9 L3526.4 914.6 L3528.4 920.3 L3530.2 926 L3532.4 926 L3534.3 931.7 L3536.4 937.4 L3538.4 937.4 L3538.5 931.7 L3540.4 943.1 L3542.4 948.8 L3543.4 943.1 L3544.4 954.5 L3545.9 965.9 L3548.4 960.2 L3550 965.9 L3552.4 971.6 L3554.9 971.6 L3556.4 983 L3558.4 983 L3559.6 972.9 L3560.7 988.8 L3564.4 988.8 L3564.8 994.5 L3568.1 994.5 L3570.4 1000.2 L3570.6 1005.9 L3572.4 994.5 L3573.1 994.5 L3574.4 1005.9 L3575.1 1011.6 L3576.4 1000.2 L3578.4 1000.2 L3580.4 1005.9 L3580.5 1005.9 L3582.1 994.5 L3584.4 983 L3586.4 983 L3588.4 971.6 L3588.7 977.3 L3590.4 965.9 L3592 965.9 L3594.4 960.2 L3595.3 954.5 L3596.4 948.8 L3597.8 937.4 L3600.4 937.4 L3601.1 931.7 L3602.4 926 L3603.6 918.5 L3605.2 903.2 L3606.4 897.4 L3608.4 886 L3609.3 886 L3610.4 880.3 L3611 874.6 L3612.4 868.9 L3614.3 862.4 L3615.9 846.1 L3618.4 834.7 L3620.1 823.3 L3622.4 811.8 L3623.4 811.8 L3624.4 806.1 L3626.4 800.4 L3626.6 796.5 L3626.9 783.1 L3627.9 749.2 L3629.9 729.3 L3630.9 715.3 L3632.4 694.8 L3632.5 693.4 L3633.3 649.6 L3633.9 603.8 L3635.8 583.6 L3637.8 577.9 L3639.8 565.9 L3641.2 579.8 L3642.4 591.8 L3642.8 595.8 L3644.2 612.1 L3645.8 611.7 L3646.8 623.5 L3648.4 629.2 L3648.8 634.9 L3649.8 657.8 L3651.8 612.1 L3653.8 634.9 L3655.8 663.5 L3657.8 634.9 L3659.8 640.6 L3661.7 634.9 L3663.7 612.1 L3665.1 612.1 L3666.3 629.2 L3668.4 623.5 L3668.7 657.8 L3670.4 612.1 L3670.7 612.1 L3672.3 634.9 L3673.7 577.9 L3675.7 606.4 L3677.7 606.4 L3678.7 646.3" stroke="#7f9c45" stroke-width="3.7" fill="none" stroke-linejoin="miter"/></svg>
<div style="position:absolute;left:1823px;top:258.8px;width:80px;height:40px;overflow:hidden;">
<div style="position:absolute;left:33.5px;top:-12px;font-size:28px;line-height:40px;color:#222;letter-spacing:-1.2px;">30</div></div>
<div style="position:absolute;left:1856.5px;top:1847.1px;height:40px;line-height:40px;font-size:28px;color:#222;font-weight:400;white-space:pre;">2</div>
<div style="position:absolute;left:1856.5px;top:1732.97px;height:40px;line-height:40px;font-size:28px;color:#222;font-weight:400;white-space:pre;">4</div>
<div style="position:absolute;left:1856.5px;top:1618.83px;height:40px;line-height:40px;font-size:28px;color:#222;font-weight:400;white-space:pre;">6</div>
<div style="position:absolute;left:1856.5px;top:1504.7px;height:40px;line-height:40px;font-size:28px;color:#222;font-weight:400;white-space:pre;">8</div>
<div style="position:absolute;left:1856.5px;top:1390.56px;height:40px;line-height:40px;font-size:28px;color:#222;font-weight:400;white-space:pre;letter-spacing:-1.2px;">10</div>
<div style="position:absolute;left:1856.5px;top:1276.42px;height:40px;line-height:40px;font-size:28px;color:#222;font-weight:400;white-space:pre;letter-spacing:-1.2px;">12</div>
<div style="position:absolute;left:1856.5px;top:1162.29px;height:40px;line-height:40px;font-size:28px;color:#222;font-weight:400;white-space:pre;letter-spacing:-1.2px;">14</div>
<div style="position:absolute;left:1856.5px;top:1048.15px;height:40px;line-height:40px;font-size:28px;color:#222;font-weight:400;white-space:pre;letter-spacing:-1.2px;">16</div>
<div style="position:absolute;left:1856.5px;top:934.016px;height:40px;line-height:40px;font-size:28px;color:#222;font-weight:400;white-space:pre;letter-spacing:-1.2px;">18</div>
<div style="position:absolute;left:1856.5px;top:819.88px;height:40px;line-height:40px;font-size:28px;color:#222;font-weight:400;white-space:pre;letter-spacing:-1.2px;">20</div>
<div style="position:absolute;left:1856.5px;top:705.744px;height:40px;line-height:40px;font-size:28px;color:#222;font-weight:400;white-space:pre;letter-spacing:-1.2px;">22</div>
<div style="position:absolute;left:1856.5px;top:591.608px;height:40px;line-height:40px;font-size:28px;color:#222;font-weight:400;white-space:pre;letter-spacing:-1.2px;">24</div>
<div style="position:absolute;left:1856.5px;top:477.472px;height:40px;line-height:40px;font-size:28px;color:#222;font-weight:400;white-space:pre;letter-spacing:-1.2px;">26</div>
<div style="position:absolute;left:1856.5px;top:363.336px;height:40px;line-height:40px;font-size:28px;color:#222;font-weight:400;white-space:pre;letter-spacing:-1.2px;">28</div>
<div style="position:absolute;left:1791.0px;top:1999px;height:40px;line-height:40px;font-size:27px;color:#222;font-weight:400;white-space:pre;width:300px;text-align:center;">Wed 6:00 PM</div>
<div style="position:absolute;left:2084.1px;top:1999px;height:40px;line-height:40px;font-size:27px;color:#222;font-weight:400;white-space:pre;width:300px;text-align:center;">Thu 9:46 PM</div>
<div style="position:absolute;left:2377.2px;top:1999px;height:40px;line-height:40px;font-size:27px;color:#222;font-weight:400;white-space:pre;width:300px;text-align:center;">Sat 1:33 AM</div>
<div style="position:absolute;left:2670.3px;top:1999px;height:40px;line-height:40px;font-size:27px;color:#222;font-weight:400;white-space:pre;width:300px;text-align:center;">Sun 5:20 AM</div>
<div style="position:absolute;left:2963.4px;top:1999px;height:40px;line-height:40px;font-size:27px;color:#222;font-weight:400;white-space:pre;width:300px;text-align:center;">Mon 9:06 AM</div>
<div style="position:absolute;left:3256.5px;top:1999px;height:40px;line-height:40px;font-size:27px;color:#222;font-weight:400;white-space:pre;width:300px;text-align:center;">Tue 12:53 PM</div>
<div style="position:absolute;left:1836px;top:2069px;width:24px;height:24px;background:#3f6a9c;"></div>
<div style="position:absolute;left:1868px;top:2061px;height:40px;line-height:40px;font-size:28.3px;color:#444;font-weight:400;white-space:pre;">Server room temperature</div>
<div style="position:absolute;left:2196px;top:2069px;width:24px;height:24px;background:#9e3c3c;"></div>
<div style="position:absolute;left:2228px;top:2061px;height:40px;line-height:40px;font-size:28.3px;color:#444;font-weight:400;white-space:pre;">Heating pipe temperature</div>
<div style="position:absolute;left:2556px;top:2069px;width:24px;height:24px;background:#7f9c45;"></div>
<div style="position:absolute;left:2588px;top:2061px;height:40px;line-height:40px;font-size:28.3px;color:#444;font-weight:400;white-space:pre;">Outside temperature</div>
<div style="position:absolute;left:6px;top:2111px;width:3698px;height:2px;background:#ababab;"></div>
</body></html>
